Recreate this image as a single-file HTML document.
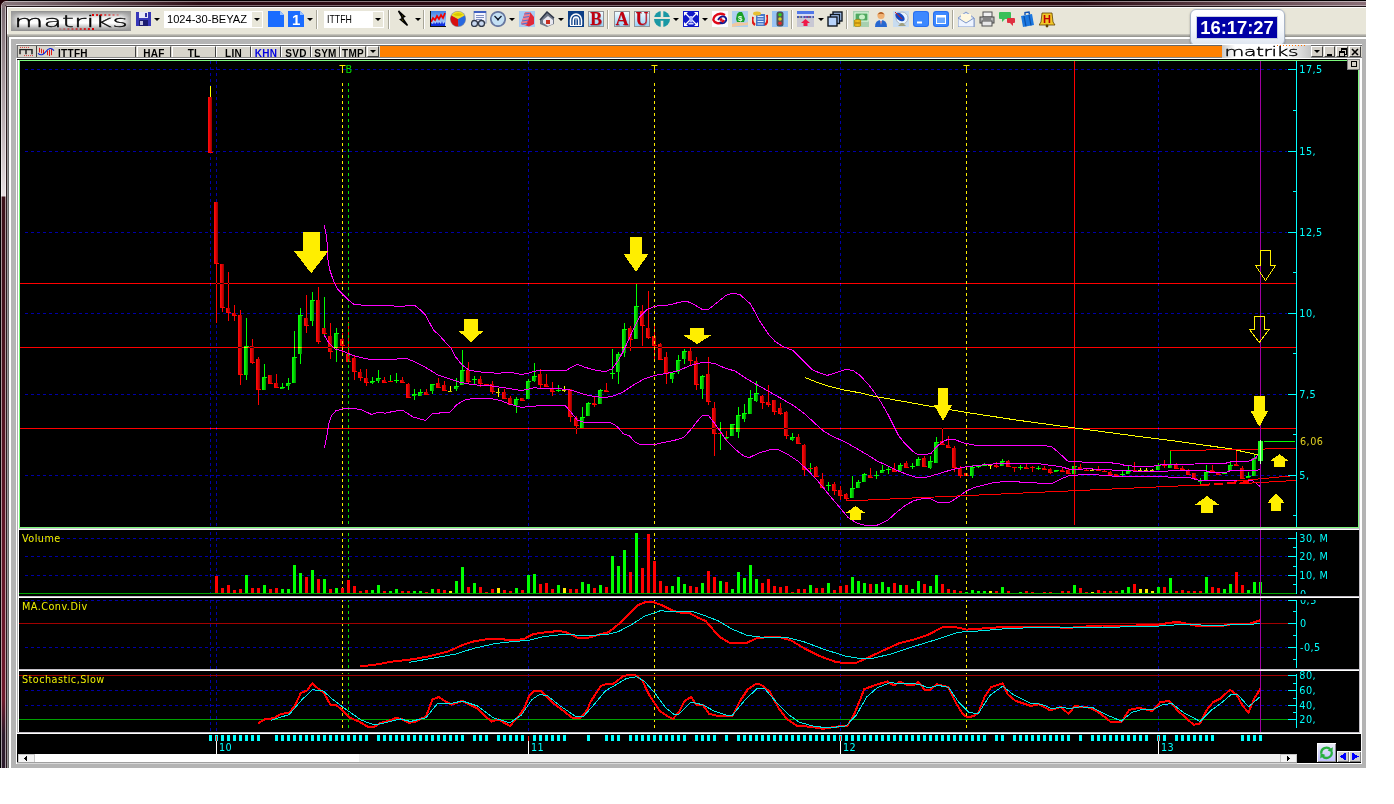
<!DOCTYPE html>
<html><head><meta charset="utf-8"><title>matriks</title>
<style>
html,body{margin:0;padding:0;background:#fff;}
body{width:1394px;height:804px;overflow:hidden;position:relative;font-family:"Liberation Sans",sans-serif;}
.abs{position:absolute;}
#win{position:absolute;left:0;top:0;width:1366px;height:768px;background:#b4b4b4;overflow:hidden;}
#ftop{position:absolute;left:0;top:0;width:1366px;height:7px;background:linear-gradient(90deg,#857479 0,#857479 10px,#2c0c14 200px,#2c0c14 1080px,#8a7078 1366px);}
#ftop:before{content:"";position:absolute;left:0;top:0;width:1366px;height:7px;background:linear-gradient(#000 0,#000 1px,rgba(255,255,255,.45) 1px,rgba(255,255,255,.45) 2px,rgba(255,255,255,0) 2px,rgba(255,255,255,0) 5px,rgba(255,255,255,.4) 5px,rgba(255,255,255,.4) 6px,#201418 6px,#201418 7px);}
#fleft{position:absolute;left:0;top:0;width:7px;height:768px;background:linear-gradient(#3a2a30 0,#7c6c72 8px,#e6dee0 196px,#3c121a 197px,#45141e 298px,#68182a 608px,#6e1a2c 700px,#2c1c2c 735px,#2c1c2c 768px);}
#fleft:before{content:"";position:absolute;left:0;top:0;width:7px;height:768px;background:linear-gradient(90deg,#000 0,#000 1px,rgba(255,255,255,.55) 1px,rgba(255,255,255,.55) 2px,rgba(255,255,255,0) 2px,rgba(255,255,255,0) 5px,rgba(255,255,255,.55) 5px,rgba(255,255,255,.55) 6px,#2a1a1e 6px,#2a1a1e 7px);}
#fl2{position:absolute;left:7px;top:37px;width:2px;height:731px;background:linear-gradient(90deg,#989898 0,#989898 1px,#6c6c6c 1px,#6c6c6c 2px);}
#tb{position:absolute;left:7px;top:7px;width:1359px;height:29px;background:#e8e6d9;box-sizing:border-box;border-top:1px solid #fff;border-left:1px solid #fff;}
#tbl1{position:absolute;left:7px;top:34px;width:1359px;height:3px;background:linear-gradient(#d0cec4,#8c8c88);}
#tbl2{position:absolute;left:7px;top:37px;width:1359px;height:2px;background:#fff;}
#lwhite{position:absolute;left:9px;top:37px;width:2px;height:731px;background:#fff;}
.combo{position:absolute;top:11px;height:17px;background:#fff;font-size:11.1px;line-height:17px;color:#000;white-space:nowrap;}
.combo .btn{position:absolute;right:1px;top:1px;width:10px;height:15px;background:#e8e6d9;}
.dd{position:absolute;width:0;height:0;border-left:3px solid transparent;border-right:3px solid transparent;border-top:3px solid #000;}
.sep{position:absolute;top:10px;width:1px;height:19px;background:#a8a698;border-right:1px solid #fff;}
#tabs{position:absolute;left:17px;top:45px;width:1345px;height:13px;background:#d8d5cc;box-sizing:border-box;border-top:1px solid #686868;border-bottom:1px solid #888;border-left:1px solid #686868;}
#tabw{position:absolute;left:16px;top:44px;width:1346px;height:1px;background:#fff;}
.cell{position:absolute;top:0;height:11px;border-left:1px solid #fff;border-top:1px solid #fff;border-right:1px solid #404040;box-sizing:border-box;font-weight:bold;font-size:10px;line-height:13px;letter-spacing:.25px;text-align:center;color:#000;overflow:hidden;background:#d8d5cc;}
#orange{position:absolute;left:362px;top:0;width:842px;height:11px;background:#ff8000;}
#clock{position:absolute;left:1190px;top:9px;width:93px;height:35px;border:1px solid #a9b4c6;border-radius:6px;background:linear-gradient(#ffffff,#f4f7fb 60%,#dfe6f1);box-sizing:content-box;box-shadow:0 1px 2px rgba(0,0,0,.35);}
#clock div{position:absolute;left:5px;top:6px;width:82px;height:23px;background:#0000a6;border:1px solid #c8d0e0;box-sizing:border-box;color:#fff;font-weight:bold;font-size:18.4px;line-height:21px;text-align:center;letter-spacing:0;}
.wb{position:absolute;top:0;height:11px;background:#d4d0c8;border:1px solid;border-color:#fff #404040 #404040 #fff;box-sizing:border-box;}
</style></head><body>
<div id="win">
<div id="fleft"></div><div id="ftop"></div><svg class="abs" style="left:0;top:0" width="8" height="8" viewBox="0 0 8 8"><rect width="8" height="8" fill="#200006"/><rect x="6" y="6" width="2" height="2" fill="#201418"/><path d="M3.5,8 V6 A2.5,2.5 0 0 1 6,3.5 H8" stroke="#857479" stroke-width="3" fill="none"/><path d="M1.5,8 V6 A4.5,4.5 0 0 1 6,1.5 H8" stroke="#c0b0b4" stroke-width="1" fill="none"/><path d="M5.5,8 V6.5 A1,1 0 0 1 6.5,5.5 H8" stroke="#c8b8bc" stroke-width="1" fill="none"/><rect x="7" y="7" width="1" height="1" fill="#fff"/></svg>
<div id="tb"></div><div id="tbl1"></div><div id="tbl2"></div><div id="lwhite"></div><div id="fl2"></div>

<svg class="abs" style="left:11px;top:11px" width="120" height="20" viewBox="0 0 120 20">
<defs><linearGradient id="lg" x1="0" x2="0" y1="0" y2="1"><stop offset="0" stop-color="#8c8c8c"/><stop offset="0.35" stop-color="#f4f4f4"/><stop offset="0.6" stop-color="#ffffff"/><stop offset="1" stop-color="#8a8a8a"/></linearGradient>
<linearGradient id="lg2" x1="0" x2="1" y1="0" y2="0"><stop offset="0" stop-color="#999" stop-opacity=".9"/><stop offset="0.08" stop-color="#999" stop-opacity="0"/><stop offset="0.92" stop-color="#999" stop-opacity="0"/><stop offset="1" stop-color="#999" stop-opacity=".9"/></linearGradient></defs>
<rect width="120" height="20" fill="url(#lg)"/><rect width="120" height="20" fill="url(#lg2)"/>
<text x="3" y="16" font-family="'DejaVu Sans Light','DejaVu Sans',sans-serif" font-weight="200" font-size="15" textLength="114" lengthAdjust="spacingAndGlyphs" fill="#000" stroke="#000" stroke-width=".3">matriks</text>
<g fill="#e00000">
<rect x="81.0" y="3" width="2" height="2" fill-opacity="1.00"/>
<rect x="85.1" y="3" width="2" height="2" fill-opacity="0.88"/>
<rect x="89.2" y="3" width="2" height="2" fill-opacity="0.76"/>
<rect x="93.3" y="3" width="2" height="2" fill-opacity="0.64"/>
<rect x="97.4" y="3" width="2" height="2" fill-opacity="0.52"/>
<rect x="101.5" y="3" width="2" height="2" fill-opacity="0.40"/>
<rect x="105.6" y="3" width="2" height="2" fill-opacity="0.28"/>
<rect x="81.0" y="17" width="2" height="2" fill-opacity="1.00"/>
<rect x="76.9" y="17" width="2" height="2" fill-opacity="0.90"/>
<rect x="72.8" y="17" width="2" height="2" fill-opacity="0.80"/>
<rect x="68.7" y="17" width="2" height="2" fill-opacity="0.70"/>
<rect x="64.6" y="17" width="2" height="2" fill-opacity="0.60"/>
<rect x="60.5" y="17" width="2" height="2" fill-opacity="0.50"/>
<rect x="56.4" y="17" width="2" height="2" fill-opacity="0.40"/>
<rect x="52.3" y="17" width="2" height="2" fill-opacity="0.30"/>
<rect x="48.2" y="17" width="2" height="2" fill-opacity="0.20"/>
</g><rect x="81" y="3" width="2" height="16" fill="#800000" fill-opacity=".0"/></svg>
<svg class="abs" style="left:136px;top:11px" width="16" height="16" viewBox="0 0 16 16"><rect x="0" y="1" width="15" height="14" fill="#3838b8"/><rect x="3" y="1" width="9" height="6" fill="#e8e8f8"/><rect x="9" y="2" width="2" height="4" fill="#3030a0"/><rect x="3" y="9" width="9" height="6" fill="#1c1c70"/><rect x="4" y="10" width="3" height="4" fill="#c0c0e0"/></svg>
<div class="dd" style="left:154px;top:18px"></div>
<div class="combo" style="left:164px;width:99px;"><span style="margin-left:3px">1024-30-BEYAZ</span><div class="btn"><div class="dd" style="left:2px;top:6px"></div></div></div>
<svg class="abs" style="left:268px;top:11px" width="16" height="16" viewBox="0 0 16 16"><path d="M0,0 H12 L16,4 V16 H0 Z" fill="#1a6cff"/><path d="M12,0 L16,4 H12 Z" fill="#9cc4ff"/></svg>
<svg class="abs" style="left:288px;top:11px" width="16" height="16" viewBox="0 0 16 16"><path d="M0,0 H12 L16,4 V16 H0 Z" fill="#1a6cff"/><path d="M12,0 L16,4 H12 Z" fill="#9cc4ff"/><text x="4" y="14" font-family="Liberation Sans,sans-serif" font-weight="bold" font-size="15" fill="#fff">1</text></svg>
<div class="dd" style="left:307px;top:18px"></div>
<div class="sep" style="left:316px"></div>
<div class="combo" style="left:324px;width:60px;"><span style="margin-left:3px;display:inline-block;transform:scaleX(.79);transform-origin:left center">ITTFH</span><div class="btn"><div class="dd" style="left:2px;top:6px"></div></div></div>
<div class="sep" style="left:388px"></div>
<svg class="abs" style="left:397px;top:10px" width="14" height="18" viewBox="0 0 14 18"><path d="M1.5,1 L7.5,6.5 L5,7.5 L10.5,15.5 L3.5,9.5 L6,8.5 Z" fill="#f0e000" stroke="#000" stroke-width="1.5" stroke-linejoin="miter"/></svg>
<div class="dd" style="left:415px;top:18px"></div>
<div class="sep" style="left:423px"></div>
<svg class="abs" style="left:430px;top:11px" width="16" height="16" viewBox="0 0 16 16"><defs><linearGradient id="ci" x1="0" x2="0" y1="0" y2="1"><stop offset="0" stop-color="#3c80e8"/><stop offset="1" stop-color="#d8e8fc"/></linearGradient></defs><rect width="16" height="16" fill="url(#ci)"/><polygon points="1,15 1,12 3,13 4,11 5,13 7,11 8,13 9,11 11,13 12,10 13,13 15,11 15,15" fill="#1030e0"/><polyline points="1,11 3,7 5,9 7,5 9,8 11,4 13,7 15,2" stroke="#f00000" stroke-width="1.7" fill="none"/><rect x="0" y="0" width="1" height="16" fill="#101010"/><rect x="0" y="15" width="16" height="1" fill="#101010"/></svg>
<svg class="abs" style="left:450px;top:11px" width="16" height="16" viewBox="0 0 16 16"><circle cx="8" cy="8" r="8" fill="#8890a0"/><path d="M8,8 L1.5,4.5 A7.3,7.3 0 0 0 8.5,15.3 Z" fill="#d81010"/><path d="M8,8 L8.5,15.3 A7.3,7.3 0 0 0 14.5,4.5 Z" fill="#2868e0"/><path d="M8,8 L1.5,4.5 A7.3,7.3 0 0 1 14.5,4.5 Z" fill="#f0e020"/><path d="M3,3.5 Q8,0.5 13,3.5 Q8,6.5 3,3.5 Z" fill="#d8c800"/></svg>
<svg class="abs" style="left:471px;top:11px" width="16" height="16" viewBox="0 0 16 16"><rect x="3" y="0" width="12" height="12" fill="#f4f4ff" stroke="#8090b0"/><rect x="3" y="0" width="12" height="2" fill="#4060c0"/><rect x="5" y="4" width="8" height="1" fill="#8090c0"/><rect x="5" y="6" width="8" height="1" fill="#8090c0"/><rect x="5" y="8" width="6" height="1" fill="#8090c0"/><circle cx="3.5" cy="12.5" r="3" fill="#c8d8f0" stroke="#303848" stroke-width="1.3"/><circle cx="10.5" cy="12.5" r="3" fill="#c8d8f0" stroke="#303848" stroke-width="1.3"/></svg>
<svg class="abs" style="left:490px;top:11px" width="16" height="16" viewBox="0 0 16 16"><circle cx="8" cy="8" r="7.2" fill="#c4e0f4" stroke="#6878a0" stroke-width="1.7"/><path d="M4.5,5 L8,8.5 L11.5,5" stroke="#101828" stroke-width="1.3" fill="none"/><circle cx="8" cy="8.5" r="1.1" fill="#101828"/></svg>
<div class="dd" style="left:509px;top:18px"></div>
<svg class="abs" style="left:519px;top:11px" width="16" height="16" viewBox="0 0 16 16"><rect width="16" height="16" fill="#a8ccf4"/><path d="M2,13 L6,1.5 L11,1 L15,6 L15,13 L10,15.5 Z" fill="#e02838"/><path d="M2,13 L6,1.5 L11,1 L11,4 L7,14.5 Z" fill="#f08090"/><path d="M3.2,10 L9.5,9 M4.4,6.5 L10,5.5 M5.6,3 L10.8,2.3 M2.6,13 L8.5,12.2" stroke="#5070d0" stroke-width="1.2"/></svg>
<svg class="abs" style="left:539px;top:11px" width="16" height="16" viewBox="0 0 16 16"><path d="M1,9 L8,1 L15,7 L15,13 L8,16 L1,13 Z" fill="#707888"/><path d="M4,9 L9,5 L14,9 L14,13 L9,15 L4,12 Z" fill="#e8e8f0"/><rect x="7" y="9" width="4" height="4" fill="#c83020"/><path d="M1,9 L8,1 L15,7" stroke="#303848" stroke-width="1.5" fill="none"/></svg>
<div class="dd" style="left:558px;top:18px"></div>
<svg class="abs" style="left:568px;top:11px" width="16" height="16" viewBox="0 0 16 16"><rect width="16" height="16" fill="#0c3f86"/><path d="M2.5,14 V9 A5.5,6 0 0 1 13.5,9 V14 M5.3,14 V9.5 A2.7,3.5 0 0 1 10.7,9.5 V14" stroke="#fff" stroke-width="1.5" fill="none"/><path d="M8,6.5 V14 M2,14.5 H14" stroke="#fff" stroke-width="1"/></svg>
<svg class="abs" style="left:588px;top:11px" width="16" height="16" viewBox="0 0 16 16"><defs><linearGradient id="lt588" x1="0" x2="0" y1="0" y2="1"><stop offset="0" stop-color="#f4fcff"/><stop offset="1" stop-color="#98d0f8"/></linearGradient></defs><rect x="0.5" y="0.5" width="15" height="15" fill="url(#lt588)" stroke="#909498"/><text x="8.6" y="14.6" text-anchor="middle" font-family="Liberation Serif,serif" font-weight="bold" font-size="18" fill="#806068" fill-opacity=".6">B</text><text x="8" y="14.2" text-anchor="middle" font-family="Liberation Serif,serif" font-weight="bold" font-size="18" fill="#c00010">B</text></svg>
<div class="sep" style="left:607px"></div>
<svg class="abs" style="left:614px;top:11px" width="16" height="16" viewBox="0 0 16 16"><defs><linearGradient id="lt614" x1="0" x2="0" y1="0" y2="1"><stop offset="0" stop-color="#f4fcff"/><stop offset="1" stop-color="#98d0f8"/></linearGradient></defs><rect x="0.5" y="0.5" width="15" height="15" fill="url(#lt614)" stroke="#909498"/><text x="8.6" y="14.6" text-anchor="middle" font-family="Liberation Serif,serif" font-weight="bold" font-size="18" fill="#806068" fill-opacity=".6">A</text><text x="8" y="14.2" text-anchor="middle" font-family="Liberation Serif,serif" font-weight="bold" font-size="18" fill="#c00010">A</text></svg>
<svg class="abs" style="left:634px;top:11px" width="16" height="16" viewBox="0 0 16 16"><defs><linearGradient id="lt634" x1="0" x2="0" y1="0" y2="1"><stop offset="0" stop-color="#f4fcff"/><stop offset="1" stop-color="#98d0f8"/></linearGradient></defs><rect x="0.5" y="0.5" width="15" height="15" fill="url(#lt634)" stroke="#909498"/><text x="8.6" y="14.6" text-anchor="middle" font-family="Liberation Serif,serif" font-weight="bold" font-size="18" fill="#806068" fill-opacity=".6">U</text><text x="8" y="14.2" text-anchor="middle" font-family="Liberation Serif,serif" font-weight="bold" font-size="18" fill="#c00010">U</text></svg>
<svg class="abs" style="left:654px;top:11px" width="16" height="16" viewBox="0 0 16 16"><circle cx="8" cy="8" r="8" fill="#1a98a4"/><rect x="6.7" y="0" width="2.6" height="16" fill="#e8e6d9"/><rect x="0" y="6" width="16" height="2" fill="#e8e6d9"/><rect x="4" y="8" width="8" height="1.5" fill="#1a98a4"/><rect x="6.7" y="8" width="2.6" height="1.5" fill="#1a98a4"/></svg>
<div class="dd" style="left:673px;top:18px"></div>
<svg class="abs" style="left:683px;top:11px" width="16" height="16" viewBox="0 0 16 16"><rect width="16" height="16" fill="#1018c8"/><path d="M2,2 L14,14 M14,2 L2,14" stroke="#fff" stroke-width="1.2"/><path d="M1,1 H5 L1,5 Z M15,1 H11 L15,5 Z M1,15 H5 L1,11 Z M15,15 H11 L15,11 Z" fill="#fff"/><rect x="6.5" y="5" width="3" height="6.5" fill="#b0b8ff"/><rect x="5.5" y="12" width="5" height="1.5" fill="#d0d4ff"/></svg>
<div class="dd" style="left:702px;top:18px"></div>
<svg class="abs" style="left:712px;top:11px" width="16" height="16" viewBox="0 0 16 16"><rect width="16" height="16" fill="#fcfcff"/><path d="M13,4 Q7,1 3,5 Q-1,10 5,12 Q10,13 12,9" stroke="#e00818" stroke-width="2.4" fill="none"/><path d="M6,9 Q9,4 13,6 Q16,9 12,12 Q9,13 8,11" stroke="#101890" stroke-width="1.8" fill="none"/><circle cx="9" cy="8.5" r="1.5" fill="#e00818"/></svg>
<svg class="abs" style="left:732px;top:11px" width="16" height="16" viewBox="0 0 16 16"><rect width="16" height="16" fill="#b0d0f0"/><path d="M5,3 L7,1 L10,1 L11,3 L13,8 L12,11 L5,11 L4,8 Z" fill="#18a028"/><text x="8.3" y="10" text-anchor="middle" font-family="Liberation Sans,sans-serif" font-weight="bold" font-size="8" fill="#e8ffe8">$</text><path d="M0,13 L6,11 L13,12 L16,11 L16,14 L6,15 L0,16 Z" fill="#f0c8a0"/></svg>
<svg class="abs" style="left:752px;top:11px" width="16" height="16" viewBox="0 0 16 16"><rect x="4" y="3" width="9" height="12" fill="#4878c8"/><rect x="5.5" y="5" width="6" height="1" fill="#e0ecff"/><rect x="5.5" y="7.5" width="6" height="1" fill="#e0ecff"/><rect x="5.5" y="10" width="6" height="1" fill="#e0ecff"/><rect x="5.5" y="12.5" width="6" height="1" fill="#e0ecff"/><ellipse cx="5" cy="2.5" rx="4" ry="2" fill="#e8c030"/><path d="M1,6 Q-1,11 3,14 M15,4 Q17,10 13,14" stroke="#e01818" stroke-width="2.2" fill="none"/></svg>
<svg class="abs" style="left:772px;top:11px" width="16" height="16" viewBox="0 0 16 16"><rect width="16" height="16" fill="#98c4f4"/><rect x="4.5" y="0.5" width="7" height="15" rx="2.5" fill="#505458"/><circle cx="8" cy="3.8" r="1.8" fill="#30d020"/><circle cx="8" cy="8" r="1.8" fill="#d8d020"/><circle cx="8" cy="12.2" r="1.8" fill="#e02828"/></svg>
<div class="sep" style="left:791px"></div>
<svg class="abs" style="left:797px;top:11px" width="17" height="16" viewBox="0 0 17 16"><rect width="17" height="16" fill="#c8c8d4"/><rect x="0" y="0" width="17" height="3" fill="#5078e8"/><rect x="0" y="3" width="17" height="2" fill="#d8dcf4"/><rect x="0" y="5" width="17" height="2" fill="#4858a8"/><g><rect x="2" y="5.5" width="1.5" height="1" fill="#f0e040"/><rect x="5" y="5.5" width="1.5" height="1" fill="#fff"/><rect x="8" y="5.5" width="1.5" height="1" fill="#f040c0"/><rect x="11" y="5.5" width="1.5" height="1" fill="#f04040"/><rect x="14" y="5.5" width="1.5" height="1" fill="#fff"/></g><path d="M8.5,8 L13,12 H10.5 V15 H6.5 V12 H4 Z" fill="#f01848"/></svg>
<div class="dd" style="left:818px;top:18px"></div>
<svg class="abs" style="left:827px;top:11px" width="16" height="16" viewBox="0 0 16 16"><rect x="6" y="1" width="9" height="9" fill="#a8c8f8" stroke="#101820" stroke-width="1.4"/><rect x="3.5" y="3.5" width="9" height="9" fill="#a8c8f8" stroke="#101820" stroke-width="1.4"/><rect x="1" y="6" width="9" height="9" fill="#b8d4fc" stroke="#101820" stroke-width="1.4"/></svg>
<div class="sep" style="left:846px"></div>
<svg class="abs" style="left:853px;top:11px" width="16" height="16" viewBox="0 0 16 16"><rect width="16" height="16" fill="#a8d0b0"/><rect x="2" y="2" width="13" height="8" fill="#50a860" stroke="#e8ffe8" stroke-width="1"/><ellipse cx="9" cy="6" rx="3" ry="2.5" fill="#c8f0c8"/><ellipse cx="4.5" cy="12" rx="3.5" ry="1.5" fill="#f0c020" stroke="#a07000" stroke-width=".6"/><ellipse cx="4.5" cy="10" rx="3.5" ry="1.5" fill="#f0c020" stroke="#a07000" stroke-width=".6"/><ellipse cx="4.5" cy="14" rx="3.5" ry="1.5" fill="#f0c020" stroke="#a07000" stroke-width=".6"/></svg>
<svg class="abs" style="left:873px;top:11px" width="16" height="16" viewBox="0 0 16 16"><circle cx="8" cy="4.5" r="3.6" fill="#f0b070"/><path d="M4.5,3.5 Q8,-1.5 11.5,3.5 Q8,2 4.5,3.5 Z" fill="#a85820"/><path d="M2,16 Q2,9 8,9 Q14,9 14,16 Z" fill="#2868d0"/><path d="M7,9 L8,14 L9,9 Z" fill="#e8f0ff"/><path d="M7.6,10 L8,13.5 L8.4,10 Z" fill="#c02020"/></svg>
<svg class="abs" style="left:893px;top:11px" width="16" height="16" viewBox="0 0 16 16"><rect width="16" height="16" fill="#c8dcf0"/><circle cx="9" cy="7" r="6" fill="#e8f4ff" stroke="#b0b8c0"/><ellipse cx="7" cy="6" rx="5.5" ry="3.2" transform="rotate(40 7 6)" fill="#1848c0"/><path d="M2,1 L9,8" stroke="#d02020" stroke-width="1"/><path d="M5,15 H13 L10,12 H8 Z" fill="#a0a080"/></svg>
<svg class="abs" style="left:913px;top:11px" width="16" height="16" viewBox="0 0 16 16"><rect width="16" height="16" rx="3" fill="#2870f0"/><rect x="1" y="1" width="14" height="14" rx="2.5" fill="#3c88ff"/><rect x="4" y="10.5" width="5" height="2" fill="#fff"/></svg>
<svg class="abs" style="left:933px;top:11px" width="16" height="16" viewBox="0 0 16 16"><rect width="16" height="16" rx="3" fill="#2870f0"/><rect x="1" y="1" width="14" height="14" rx="2.5" fill="#3c88ff"/><rect x="3.5" y="4.5" width="9" height="8" fill="#6aa8ff" stroke="#fff" stroke-width="1"/><rect x="3" y="4" width="10" height="2.5" fill="#fff"/></svg>
<div class="sep" style="left:952px"></div>
<svg class="abs" style="left:958px;top:11px" width="17" height="16" viewBox="0 0 17 16"><path d="M0,7 L8,1 L16,7 V16 H0 Z" fill="#d8e4f8" stroke="#8098c8"/><rect x="3" y="3" width="10" height="8" fill="#fff8e0"/><path d="M0,7 L8,12 L16,7 V16 H0 Z" fill="#eef4ff" stroke="#8098c8"/></svg>
<svg class="abs" style="left:979px;top:11px" width="16" height="16" viewBox="0 0 16 16"><rect x="4" y="1" width="9" height="5" fill="#f0f0f0" stroke="#505050"/><rect x="1" y="6" width="14" height="6" fill="#b8b8b8" stroke="#484848"/><rect x="3" y="10" width="10" height="5" fill="#e8e8e8" stroke="#505050"/><rect x="4" y="7.5" width="8" height="1" fill="#505050"/></svg>
<svg class="abs" style="left:999px;top:11px" width="16" height="16" viewBox="0 0 16 16"><path d="M1,1 H11 Q12,1 12,2 V7 Q12,8 11,8 H6 L3,11 V8 H1 Q0,8 0,7 V2 Q0,1 1,1 Z" fill="#38c058"/><path d="M9,7 H15 Q16,7 16,8 V11 Q16,12 15,12 H14 V15 L11,12 H9 Q8,12 8,11 V8 Q8,7 9,7 Z" fill="#e03040"/></svg>
<svg class="abs" style="left:1019px;top:11px" width="16" height="16" viewBox="0 0 16 16"><path d="M2,5 L13,3 L15,14 L4,16 Z" fill="#1c78e0"/><path d="M6,4 L6,1.5 L10,1 L10.5,3.5" stroke="#1050b0" stroke-width="1.4" fill="none"/><path d="M5,5 L7,15.4 M10,4 L12,14.5" stroke="#0c50a8" stroke-width="1.2"/></svg>
<svg class="abs" style="left:1039px;top:11px" width="17" height="17" viewBox="0 0 17 17"><path d="M3,2 H13 L14,11 L16,14 H0 L2,11 Z" fill="#f0c828" stroke="#604000" stroke-width=".8"/><circle cx="8" cy="15" r="1.4" fill="#604000"/><text x="8" y="12" text-anchor="middle" font-family="Liberation Sans,sans-serif" font-weight="bold" font-size="11" fill="#c00000">H</text></svg>
<div id="clock"><div>16:17:27</div></div>
<div id="tabw"></div><div id="tabs">
<div id="orange"></div>
<svg class="abs" style="left:0px;top:0px" width="38" height="11" viewBox="0 0 38 12" preserveAspectRatio="none"><rect width="18" height="12" fill="#d8d5cc"/><path d="M2,9 V4 H14 V9 M8,4 V9" stroke="#202020" stroke-width="1.5" fill="none"/><g fill="#e03030"><rect x="2" y="1" width="1" height="1"/><rect x="4" y="1" width="1" height="1"/><rect x="6" y="1" width="1" height="1"/><rect x="8" y="1" width="1" height="1"/><rect x="10" y="1" width="1" height="1"/><rect x="6" y="10" width="1" height="1"/><rect x="8" y="10" width="1" height="1"/><rect x="10" y="10" width="1" height="1"/><rect x="12" y="10" width="1" height="1"/><rect x="14" y="10" width="1" height="1"/></g><rect x="18" y="0" width="1" height="12" fill="#404040"/><rect x="19" y="0" width="18" height="12" fill="#d8d5cc"/><g stroke="#e01010" stroke-width="1"><path d="M21.5,2 V7 M23.5,3 V8 M25.5,4 V9 M29.5,5 V10 M31.5,4 V11 M33.5,3 V10"/></g><path d="M20,8 Q24,12 28,6 T36,5" stroke="#0020e0" stroke-width="1.2" fill="none"/><rect x="37" y="0" width="1" height="12" fill="#404040"/></svg>
<div class="cell" style="left:37px;width:81px;color:#000;text-align:left;padding-left:3px;letter-spacing:.3px;border-left:none;">ITTFH</div>
<div class="cell" style="left:119px;width:34px;color:#000;">HAF</div>
<div class="cell" style="left:154px;width:44px;color:#000;">TL</div>
<div class="cell" style="left:198px;width:35px;color:#000;">LIN</div>
<div class="cell" style="left:233px;width:30px;color:#0000e0;">KHN</div>
<div class="cell" style="left:263px;width:30px;color:#000;">SVD</div>
<div class="cell" style="left:293px;width:29px;color:#000;">SYM</div>
<div class="cell" style="left:322px;width:26px;color:#000;">TMP</div>
<div class="wb" style="left:349px;width:12px;"><div class="dd" style="left:2px;top:3px"></div></div>
<svg class="abs" style="left:1204px;top:-1px" width="89" height="13" viewBox="0 0 89 13"><defs><linearGradient id="lg3" x1="0" x2="1" y1="0" y2="0"><stop offset="0" stop-color="#c8c8c8"/><stop offset="0.15" stop-color="#ffffff"/><stop offset="0.7" stop-color="#ffffff"/><stop offset="1" stop-color="#c4c4c4"/></linearGradient></defs><rect width="89" height="13" fill="url(#lg3)"/>
<text transform="translate(2.5,11.2) scale(1.57,1)" font-family="'DejaVu Sans Light','DejaVu Sans',sans-serif" font-weight="200" font-size="13" letter-spacing="-0.3" fill="#000" stroke="#000" stroke-width=".35">matriks</text>
<g fill="#ff7000"><rect x="55" y="0" width="1" height="1"/><rect x="58" y="0" width="1" height="1"/><rect x="61" y="0" width="1" height="1"/><rect x="64" y="0" width="1" height="1"/><rect x="67" y="0" width="1" height="1"/><rect x="70" y="0" width="1" height="1"/><rect x="73" y="0" width="1" height="1"/><rect x="76" y="0" width="1" height="1"/><rect x="79" y="0" width="1" height="1"/><rect x="82" y="0" width="1" height="1"/></g></svg>
<div class="wb" style="left:1293px;width:12px;"><div class="dd" style="left:2px;top:3px"></div></div>
<div class="wb" style="left:1306px;width:11px;"><div class="abs" style="left:2px;top:7px;width:5px;height:2px;background:#000"></div></div>
<div class="wb" style="left:1318px;width:12px;"><div class="abs" style="left:4px;top:1px;width:4px;height:4px;border:1px solid #000;border-top-width:2px;box-sizing:content-box"></div><div class="abs" style="left:2px;top:4px;width:4px;height:3px;border:1px solid #000;border-top-width:2px;background:#d4d0c8;box-sizing:content-box"></div></div>
<div class="wb" style="left:1331px;width:12px;"><svg class="abs" style="left:1px;top:1px" width="8" height="8" viewBox="0 0 8 8"><path d="M1,1 L7,7 M7,1 L1,7" stroke="#000" stroke-width="1.6"/></svg></div>
</div>
<svg id="chart" width="1394" height="804" viewBox="0 0 1394 804" shape-rendering="crispEdges" style="position:absolute;left:0;top:0">
<defs>
<linearGradient id="gR" x1="0" x2="1" y1="0" y2="0"><stop offset="0" stop-color="#ff1010"/><stop offset="0.45" stop-color="#e80000"/><stop offset="1" stop-color="#900000"/></linearGradient>
<linearGradient id="gG" x1="0" x2="1" y1="0" y2="0"><stop offset="0" stop-color="#10ff10"/><stop offset="0.45" stop-color="#00e000"/><stop offset="1" stop-color="#008800"/></linearGradient>
<linearGradient id="gY" x1="0" x2="1" y1="0" y2="0"><stop offset="0" stop-color="#ffff00"/><stop offset="1" stop-color="#b0b000"/></linearGradient>
</defs>
<rect x="16" y="58" width="1346" height="706" fill="#ffffff" />
<rect x="17" y="59" width="1342" height="1" fill="#000000" />
<rect x="19" y="60" width="1340" height="468" fill="#7cf87c" />
<rect x="20" y="61" width="1338" height="466" fill="#000000" />
<rect x="19" y="528" width="1341" height="1" fill="#c4c0c8" />
<rect x="19" y="530" width="1340" height="66" fill="#000000" />
<rect x="19" y="596" width="1341" height="1" fill="#c4c0c8" />
<rect x="19" y="598" width="1340" height="71" fill="#000000" />
<rect x="19" y="669" width="1341" height="1" fill="#c4c0c8" />
<rect x="19" y="671" width="1340" height="61" fill="#000000" />
<rect x="17" y="732" width="1343" height="1" fill="#c4c0c8" />
<rect x="17" y="60" width="1" height="672" fill="#b0b0b0" />
<rect x="1359" y="60" width="1" height="672" fill="#c4c0c8" />
<rect x="17" y="734" width="1344" height="29" fill="#000000" />
<line x1="25" y1="69.5" x2="1287" y2="69.5" stroke="#0000a8" stroke-dasharray="3 3"/>
<line x1="25" y1="151.5" x2="1287" y2="151.5" stroke="#0000a8" stroke-dasharray="3 3"/>
<line x1="25" y1="232.5" x2="1287" y2="232.5" stroke="#0000a8" stroke-dasharray="3 3"/>
<line x1="25" y1="313.5" x2="1287" y2="313.5" stroke="#0000a8" stroke-dasharray="3 3"/>
<line x1="25" y1="394.5" x2="1287" y2="394.5" stroke="#0000a8" stroke-dasharray="3 3"/>
<line x1="25" y1="475.5" x2="1287" y2="475.5" stroke="#0000a8" stroke-dasharray="3 3"/>
<line x1="210.5" y1="61" x2="210.5" y2="527" stroke="#0000a8" stroke-dasharray="3 3"/>
<line x1="210.5" y1="530" x2="210.5" y2="593" stroke="#0000a8" stroke-dasharray="3 3" stroke-dashoffset="4"/>
<line x1="210.5" y1="598" x2="210.5" y2="669" stroke="#0000a8" stroke-dasharray="3 3" stroke-dashoffset="4"/>
<line x1="210.5" y1="671" x2="210.5" y2="732" stroke="#0000a8" stroke-dasharray="3 3" stroke-dashoffset="3"/>
<line x1="216.5" y1="61" x2="216.5" y2="527" stroke="#0000a8" stroke-dasharray="3 3"/>
<line x1="216.5" y1="530" x2="216.5" y2="593" stroke="#0000a8" stroke-dasharray="3 3" stroke-dashoffset="4"/>
<line x1="216.5" y1="598" x2="216.5" y2="669" stroke="#0000a8" stroke-dasharray="3 3" stroke-dashoffset="4"/>
<line x1="216.5" y1="671" x2="216.5" y2="732" stroke="#0000a8" stroke-dasharray="3 3" stroke-dashoffset="3"/>
<line x1="528.5" y1="61" x2="528.5" y2="527" stroke="#0000a8" stroke-dasharray="3 3"/>
<line x1="528.5" y1="530" x2="528.5" y2="593" stroke="#0000a8" stroke-dasharray="3 3" stroke-dashoffset="4"/>
<line x1="528.5" y1="598" x2="528.5" y2="669" stroke="#0000a8" stroke-dasharray="3 3" stroke-dashoffset="4"/>
<line x1="528.5" y1="671" x2="528.5" y2="732" stroke="#0000a8" stroke-dasharray="3 3" stroke-dashoffset="3"/>
<line x1="840.5" y1="61" x2="840.5" y2="527" stroke="#0000a8" stroke-dasharray="3 3"/>
<line x1="840.5" y1="530" x2="840.5" y2="593" stroke="#0000a8" stroke-dasharray="3 3" stroke-dashoffset="4"/>
<line x1="840.5" y1="598" x2="840.5" y2="669" stroke="#0000a8" stroke-dasharray="3 3" stroke-dashoffset="4"/>
<line x1="840.5" y1="671" x2="840.5" y2="732" stroke="#0000a8" stroke-dasharray="3 3" stroke-dashoffset="3"/>
<line x1="1158.5" y1="61" x2="1158.5" y2="527" stroke="#0000a8" stroke-dasharray="3 3"/>
<line x1="1158.5" y1="530" x2="1158.5" y2="593" stroke="#0000a8" stroke-dasharray="3 3" stroke-dashoffset="4"/>
<line x1="1158.5" y1="598" x2="1158.5" y2="669" stroke="#0000a8" stroke-dasharray="3 3" stroke-dashoffset="4"/>
<line x1="1158.5" y1="671" x2="1158.5" y2="732" stroke="#0000a8" stroke-dasharray="3 3" stroke-dashoffset="3"/>
<line x1="25" y1="538.5" x2="1287" y2="538.5" stroke="#0000a8" stroke-dasharray="3 3"/>
<line x1="25" y1="556.5" x2="1287" y2="556.5" stroke="#0000a8" stroke-dasharray="3 3"/>
<line x1="25" y1="575.5" x2="1287" y2="575.5" stroke="#0000a8" stroke-dasharray="3 3"/>
<line x1="25" y1="600.5" x2="1287" y2="600.5" stroke="#0000a8" stroke-dasharray="3 3"/>
<line x1="25" y1="647.5" x2="1287" y2="647.5" stroke="#0000a8" stroke-dasharray="3 3"/>
<line x1="25" y1="690.5" x2="1287" y2="690.5" stroke="#0000a8" stroke-dasharray="3 3"/>
<line x1="25" y1="705.5" x2="1287" y2="705.5" stroke="#0000a8" stroke-dasharray="3 3"/>
<rect x="210" y="86" width="1" height="67" fill="#ffff00" />
<rect x="208" y="97" width="4" height="56" fill="url(#gR)" />
<rect x="208" y="152" width="5" height="1" fill="#ff0000" />
<rect x="216" y="202" width="1" height="121" fill="#ff0000" />
<rect x="214" y="202" width="4" height="62" fill="url(#gR)" />
<rect x="214" y="263" width="5" height="1" fill="#ff0000" />
<rect x="222" y="264" width="1" height="48" fill="#ff0000" />
<rect x="220" y="264" width="4" height="44" fill="url(#gR)" />
<rect x="220" y="307" width="5" height="1" fill="#ff0000" />
<rect x="228" y="272" width="1" height="49" fill="#ff0000" />
<rect x="226" y="308" width="4" height="5" fill="url(#gR)" />
<rect x="226" y="312" width="5" height="1" fill="#ff0000" />
<rect x="234" y="305" width="1" height="16" fill="#ff0000" />
<rect x="232" y="313" width="4" height="3" fill="url(#gR)" />
<rect x="232" y="315" width="5" height="1" fill="#ff0000" />
<rect x="240" y="310" width="1" height="75" fill="#ff0000" />
<rect x="238" y="315" width="4" height="60" fill="url(#gR)" />
<rect x="238" y="374" width="5" height="1" fill="#ff0000" />
<rect x="246" y="318" width="1" height="62" fill="#00ff00" />
<rect x="244" y="346" width="4" height="29" fill="url(#gG)" />
<rect x="244" y="346" width="5" height="1" fill="#00ff00" />
<rect x="252" y="339" width="1" height="25" fill="#ff0000" />
<rect x="250" y="346" width="4" height="17" fill="url(#gR)" />
<rect x="250" y="362" width="5" height="1" fill="#ff0000" />
<rect x="258" y="357" width="1" height="48" fill="#ff0000" />
<rect x="256" y="359" width="4" height="31" fill="url(#gR)" />
<rect x="256" y="389" width="5" height="1" fill="#ff0000" />
<rect x="264" y="364" width="1" height="26" fill="#00ff00" />
<rect x="262" y="377" width="4" height="13" fill="url(#gG)" />
<rect x="262" y="377" width="5" height="1" fill="#00ff00" />
<rect x="270" y="375" width="1" height="9" fill="#ff0000" />
<rect x="268" y="375" width="4" height="9" fill="url(#gR)" />
<rect x="268" y="383" width="5" height="1" fill="#ff0000" />
<rect x="276" y="374" width="1" height="14" fill="#ff0000" />
<rect x="274" y="383" width="4" height="5" fill="url(#gR)" />
<rect x="274" y="387" width="5" height="1" fill="#ff0000" />
<rect x="282" y="383" width="1" height="6" fill="#00ff00" />
<rect x="280" y="387" width="4" height="2" fill="url(#gG)" />
<rect x="280" y="387" width="5" height="1" fill="#00ff00" />
<rect x="288" y="378" width="1" height="12" fill="#00ff00" />
<rect x="286" y="383" width="4" height="3" fill="url(#gG)" />
<rect x="286" y="383" width="5" height="1" fill="#00ff00" />
<rect x="294" y="331" width="1" height="52" fill="#00ff00" />
<rect x="292" y="357" width="4" height="26" fill="url(#gG)" />
<rect x="292" y="357" width="5" height="1" fill="#00ff00" />
<rect x="300" y="308" width="1" height="56" fill="#00ff00" />
<rect x="298" y="315" width="4" height="39" fill="url(#gG)" />
<rect x="298" y="315" width="5" height="1" fill="#00ff00" />
<rect x="306" y="295" width="1" height="38" fill="#ff0000" />
<rect x="304" y="318" width="4" height="8" fill="url(#gR)" />
<rect x="304" y="325" width="5" height="1" fill="#ff0000" />
<rect x="312" y="292" width="1" height="34" fill="#00ff00" />
<rect x="310" y="300" width="4" height="21" fill="url(#gG)" />
<rect x="310" y="300" width="5" height="1" fill="#00ff00" />
<rect x="318" y="287" width="1" height="57" fill="#ff0000" />
<rect x="316" y="300" width="4" height="42" fill="url(#gR)" />
<rect x="316" y="341" width="5" height="1" fill="#ff0000" />
<rect x="324" y="297" width="1" height="39" fill="#00ff00" />
<rect x="322" y="328" width="4" height="6" fill="url(#gR)" />
<rect x="322" y="333" width="5" height="1" fill="#ff0000" />
<rect x="330" y="323" width="1" height="36" fill="#ff0000" />
<rect x="328" y="336" width="4" height="16" fill="url(#gR)" />
<rect x="328" y="351" width="5" height="1" fill="#ff0000" />
<rect x="336" y="328" width="1" height="34" fill="#00ff00" />
<rect x="334" y="333" width="4" height="15" fill="url(#gG)" />
<rect x="334" y="333" width="5" height="1" fill="#00ff00" />
<rect x="342" y="333" width="1" height="22" fill="#ff0000" />
<rect x="340" y="339" width="4" height="7" fill="url(#gR)" />
<rect x="340" y="345" width="5" height="1" fill="#ff0000" />
<rect x="348" y="322" width="1" height="40" fill="#ff0000" />
<rect x="346" y="354" width="4" height="8" fill="url(#gR)" />
<rect x="346" y="361" width="5" height="1" fill="#ff0000" />
<rect x="354" y="355" width="1" height="25" fill="#ff0000" />
<rect x="352" y="358" width="4" height="14" fill="url(#gR)" />
<rect x="352" y="371" width="5" height="1" fill="#ff0000" />
<rect x="360" y="369" width="1" height="12" fill="#ff0000" />
<rect x="358" y="372" width="4" height="6" fill="url(#gR)" />
<rect x="358" y="377" width="5" height="1" fill="#ff0000" />
<rect x="366" y="369" width="1" height="17" fill="#ff0000" />
<rect x="364" y="378" width="4" height="5" fill="url(#gR)" />
<rect x="364" y="382" width="5" height="1" fill="#ff0000" />
<rect x="372" y="377" width="1" height="7" fill="#00ff00" />
<rect x="370" y="381" width="4" height="2" fill="url(#gG)" />
<rect x="370" y="381" width="5" height="1" fill="#00ff00" />
<rect x="378" y="370" width="1" height="13" fill="#00ff00" />
<rect x="376" y="378" width="4" height="3" fill="url(#gG)" />
<rect x="376" y="378" width="5" height="1" fill="#00ff00" />
<rect x="384" y="377" width="1" height="6" fill="#ff0000" />
<rect x="382" y="380" width="4" height="3" fill="url(#gR)" />
<rect x="382" y="382" width="5" height="1" fill="#ff0000" />
<rect x="390" y="375" width="1" height="7" fill="#00ff00" />
<rect x="388" y="381" width="4" height="1" fill="url(#gR)" />
<rect x="388" y="381" width="5" height="1" fill="#ff0000" />
<rect x="396" y="373" width="1" height="10" fill="#00ff00" />
<rect x="394" y="380" width="4" height="1" fill="url(#gG)" />
<rect x="394" y="380" width="5" height="1" fill="#00ff00" />
<rect x="402" y="377" width="1" height="6" fill="#ff0000" />
<rect x="400" y="380" width="4" height="3" fill="url(#gR)" />
<rect x="400" y="382" width="5" height="1" fill="#ff0000" />
<rect x="408" y="383" width="1" height="15" fill="#ff0000" />
<rect x="406" y="384" width="4" height="14" fill="url(#gR)" />
<rect x="406" y="397" width="5" height="1" fill="#ff0000" />
<rect x="414" y="389" width="1" height="11" fill="#00ff00" />
<rect x="412" y="394" width="4" height="2" fill="url(#gG)" />
<rect x="412" y="394" width="5" height="1" fill="#00ff00" />
<rect x="420" y="389" width="1" height="7" fill="#00ff00" />
<rect x="418" y="392" width="4" height="4" fill="url(#gG)" />
<rect x="418" y="392" width="5" height="1" fill="#00ff00" />
<rect x="426" y="389" width="1" height="6" fill="#ff0000" />
<rect x="424" y="392" width="4" height="3" fill="url(#gR)" />
<rect x="424" y="394" width="5" height="1" fill="#ff0000" />
<rect x="432" y="384" width="1" height="10" fill="#00ff00" />
<rect x="430" y="384" width="4" height="7" fill="url(#gG)" />
<rect x="430" y="384" width="5" height="1" fill="#00ff00" />
<rect x="438" y="378" width="1" height="10" fill="#ff0000" />
<rect x="436" y="383" width="4" height="5" fill="url(#gR)" />
<rect x="436" y="387" width="5" height="1" fill="#ff0000" />
<rect x="444" y="381" width="1" height="10" fill="#ff0000" />
<rect x="442" y="385" width="4" height="6" fill="url(#gR)" />
<rect x="442" y="390" width="5" height="1" fill="#ff0000" />
<rect x="450" y="386" width="1" height="6" fill="#ffff00" />
<rect x="448" y="391" width="4" height="1" fill="url(#gY)" />
<rect x="456" y="378" width="1" height="13" fill="#00ff00" />
<rect x="454" y="386" width="4" height="3" fill="url(#gG)" />
<rect x="454" y="386" width="5" height="1" fill="#00ff00" />
<rect x="462" y="350" width="1" height="35" fill="#00ff00" />
<rect x="460" y="370" width="4" height="15" fill="url(#gG)" />
<rect x="460" y="370" width="5" height="1" fill="#00ff00" />
<rect x="468" y="362" width="1" height="22" fill="#ff0000" />
<rect x="466" y="370" width="4" height="12" fill="url(#gR)" />
<rect x="466" y="381" width="5" height="1" fill="#ff0000" />
<rect x="474" y="376" width="1" height="9" fill="#00ff00" />
<rect x="472" y="379" width="4" height="1" fill="url(#gG)" />
<rect x="472" y="379" width="5" height="1" fill="#00ff00" />
<rect x="480" y="376" width="1" height="11" fill="#ff0000" />
<rect x="478" y="379" width="4" height="5" fill="url(#gR)" />
<rect x="478" y="383" width="5" height="1" fill="#ff0000" />
<rect x="486" y="384" width="1" height="1" fill="#ff0000" />
<rect x="484" y="384" width="4" height="1" fill="url(#gR)" />
<rect x="484" y="384" width="5" height="1" fill="#ff0000" />
<rect x="492" y="381" width="1" height="13" fill="#ff0000" />
<rect x="490" y="384" width="4" height="8" fill="url(#gR)" />
<rect x="490" y="391" width="5" height="1" fill="#ff0000" />
<rect x="498" y="388" width="1" height="9" fill="#ffff00" />
<rect x="496" y="392" width="4" height="1" fill="url(#gY)" />
<rect x="504" y="389" width="1" height="10" fill="#ff0000" />
<rect x="502" y="392" width="4" height="7" fill="url(#gR)" />
<rect x="502" y="398" width="5" height="1" fill="#ff0000" />
<rect x="510" y="396" width="1" height="9" fill="#ff0000" />
<rect x="508" y="398" width="4" height="7" fill="url(#gR)" />
<rect x="508" y="404" width="5" height="1" fill="#ff0000" />
<rect x="516" y="397" width="1" height="16" fill="#00ff00" />
<rect x="514" y="399" width="4" height="6" fill="url(#gG)" />
<rect x="514" y="399" width="5" height="1" fill="#00ff00" />
<rect x="522" y="398" width="1" height="3" fill="#ff0000" />
<rect x="520" y="398" width="4" height="3" fill="url(#gR)" />
<rect x="520" y="400" width="5" height="1" fill="#ff0000" />
<rect x="528" y="379" width="1" height="20" fill="#00ff00" />
<rect x="526" y="381" width="4" height="18" fill="url(#gG)" />
<rect x="526" y="381" width="5" height="1" fill="#00ff00" />
<rect x="534" y="363" width="1" height="19" fill="#00ff00" />
<rect x="532" y="376" width="4" height="5" fill="url(#gG)" />
<rect x="532" y="376" width="5" height="1" fill="#00ff00" />
<rect x="540" y="369" width="1" height="19" fill="#ff0000" />
<rect x="538" y="374" width="4" height="11" fill="url(#gR)" />
<rect x="538" y="384" width="5" height="1" fill="#ff0000" />
<rect x="546" y="374" width="1" height="13" fill="#ff0000" />
<rect x="544" y="384" width="4" height="3" fill="url(#gR)" />
<rect x="544" y="386" width="5" height="1" fill="#ff0000" />
<rect x="552" y="382" width="1" height="14" fill="#ff0000" />
<rect x="550" y="389" width="4" height="3" fill="url(#gR)" />
<rect x="550" y="391" width="5" height="1" fill="#ff0000" />
<rect x="558" y="385" width="1" height="7" fill="#00ff00" />
<rect x="556" y="390" width="4" height="1" fill="url(#gG)" />
<rect x="556" y="390" width="5" height="1" fill="#00ff00" />
<rect x="564" y="386" width="1" height="6" fill="#ffff00" />
<rect x="562" y="390" width="4" height="1" fill="url(#gY)" />
<rect x="570" y="389" width="1" height="33" fill="#ff0000" />
<rect x="568" y="389" width="4" height="28" fill="url(#gR)" />
<rect x="568" y="416" width="5" height="1" fill="#ff0000" />
<rect x="576" y="416" width="1" height="18" fill="#ff0000" />
<rect x="574" y="418" width="4" height="8" fill="url(#gR)" />
<rect x="574" y="425" width="5" height="1" fill="#ff0000" />
<rect x="582" y="407" width="1" height="21" fill="#00ff00" />
<rect x="580" y="417" width="4" height="11" fill="url(#gG)" />
<rect x="580" y="417" width="5" height="1" fill="#00ff00" />
<rect x="588" y="402" width="1" height="14" fill="#00ff00" />
<rect x="586" y="403" width="4" height="13" fill="url(#gG)" />
<rect x="586" y="403" width="5" height="1" fill="#00ff00" />
<rect x="594" y="397" width="1" height="10" fill="#ff0000" />
<rect x="592" y="403" width="4" height="2" fill="url(#gR)" />
<rect x="592" y="404" width="5" height="1" fill="#ff0000" />
<rect x="600" y="389" width="1" height="15" fill="#00ff00" />
<rect x="598" y="390" width="4" height="14" fill="url(#gG)" />
<rect x="598" y="390" width="5" height="1" fill="#00ff00" />
<rect x="606" y="383" width="1" height="9" fill="#ff0000" />
<rect x="604" y="390" width="4" height="2" fill="url(#gR)" />
<rect x="604" y="391" width="5" height="1" fill="#ff0000" />
<rect x="612" y="349" width="1" height="30" fill="#00ff00" />
<rect x="610" y="373" width="4" height="1" fill="url(#gG)" />
<rect x="610" y="373" width="5" height="1" fill="#00ff00" />
<rect x="618" y="352" width="1" height="32" fill="#00ff00" />
<rect x="616" y="354" width="4" height="18" fill="url(#gG)" />
<rect x="616" y="354" width="5" height="1" fill="#00ff00" />
<rect x="624" y="323" width="1" height="34" fill="#00ff00" />
<rect x="622" y="329" width="4" height="24" fill="url(#gG)" />
<rect x="622" y="329" width="5" height="1" fill="#00ff00" />
<rect x="630" y="326" width="1" height="25" fill="#ff0000" />
<rect x="628" y="328" width="4" height="12" fill="url(#gR)" />
<rect x="628" y="339" width="5" height="1" fill="#ff0000" />
<rect x="636" y="284" width="1" height="55" fill="#00ff00" />
<rect x="634" y="306" width="4" height="33" fill="url(#gG)" />
<rect x="634" y="306" width="5" height="1" fill="#00ff00" />
<rect x="642" y="305" width="1" height="41" fill="#ff0000" />
<rect x="640" y="311" width="4" height="15" fill="url(#gR)" />
<rect x="640" y="325" width="5" height="1" fill="#ff0000" />
<rect x="648" y="291" width="1" height="48" fill="#ff0000" />
<rect x="646" y="328" width="4" height="10" fill="url(#gR)" />
<rect x="646" y="337" width="5" height="1" fill="#ff0000" />
<rect x="654" y="325" width="1" height="37" fill="#ff0000" />
<rect x="652" y="336" width="4" height="10" fill="url(#gR)" />
<rect x="652" y="345" width="5" height="1" fill="#ff0000" />
<rect x="660" y="343" width="1" height="17" fill="#ff0000" />
<rect x="658" y="344" width="4" height="16" fill="url(#gR)" />
<rect x="658" y="359" width="5" height="1" fill="#ff0000" />
<rect x="666" y="352" width="1" height="32" fill="#ff0000" />
<rect x="664" y="357" width="4" height="17" fill="url(#gR)" />
<rect x="664" y="373" width="5" height="1" fill="#ff0000" />
<rect x="672" y="373" width="1" height="10" fill="#00ff00" />
<rect x="670" y="373" width="4" height="6" fill="url(#gG)" />
<rect x="670" y="373" width="5" height="1" fill="#00ff00" />
<rect x="678" y="355" width="1" height="19" fill="#00ff00" />
<rect x="676" y="360" width="4" height="12" fill="url(#gG)" />
<rect x="676" y="360" width="5" height="1" fill="#00ff00" />
<rect x="684" y="349" width="1" height="15" fill="#00ff00" />
<rect x="682" y="351" width="4" height="8" fill="url(#gG)" />
<rect x="682" y="351" width="5" height="1" fill="#00ff00" />
<rect x="690" y="348" width="1" height="17" fill="#ff0000" />
<rect x="688" y="351" width="4" height="10" fill="url(#gR)" />
<rect x="688" y="360" width="5" height="1" fill="#ff0000" />
<rect x="696" y="357" width="1" height="33" fill="#ff0000" />
<rect x="694" y="361" width="4" height="24" fill="url(#gR)" />
<rect x="694" y="384" width="5" height="1" fill="#ff0000" />
<rect x="702" y="375" width="1" height="24" fill="#00ff00" />
<rect x="700" y="376" width="4" height="13" fill="url(#gG)" />
<rect x="700" y="376" width="5" height="1" fill="#00ff00" />
<rect x="708" y="357" width="1" height="48" fill="#ff0000" />
<rect x="706" y="374" width="4" height="28" fill="url(#gR)" />
<rect x="706" y="401" width="5" height="1" fill="#ff0000" />
<rect x="714" y="402" width="1" height="54" fill="#ff0000" />
<rect x="712" y="408" width="4" height="26" fill="url(#gR)" />
<rect x="712" y="433" width="5" height="1" fill="#ff0000" />
<rect x="720" y="422" width="1" height="28" fill="#00ff00" />
<rect x="718" y="433" width="4" height="1" fill="url(#gR)" />
<rect x="718" y="433" width="5" height="1" fill="#ff0000" />
<rect x="726" y="431" width="1" height="10" fill="#ff0000" />
<rect x="724" y="437" width="4" height="2" fill="url(#gG)" />
<rect x="724" y="437" width="5" height="1" fill="#00ff00" />
<rect x="732" y="424" width="1" height="12" fill="#00ff00" />
<rect x="730" y="424" width="4" height="12" fill="url(#gG)" />
<rect x="730" y="424" width="5" height="1" fill="#00ff00" />
<rect x="738" y="407" width="1" height="31" fill="#00ff00" />
<rect x="736" y="415" width="4" height="17" fill="url(#gG)" />
<rect x="736" y="415" width="5" height="1" fill="#00ff00" />
<rect x="744" y="404" width="1" height="18" fill="#00ff00" />
<rect x="742" y="413" width="4" height="6" fill="url(#gG)" />
<rect x="742" y="413" width="5" height="1" fill="#00ff00" />
<rect x="750" y="390" width="1" height="24" fill="#00ff00" />
<rect x="748" y="398" width="4" height="16" fill="url(#gG)" />
<rect x="748" y="398" width="5" height="1" fill="#00ff00" />
<rect x="756" y="381" width="1" height="21" fill="#00ff00" />
<rect x="754" y="393" width="4" height="8" fill="url(#gG)" />
<rect x="754" y="393" width="5" height="1" fill="#00ff00" />
<rect x="762" y="395" width="1" height="14" fill="#ff0000" />
<rect x="760" y="396" width="4" height="7" fill="url(#gR)" />
<rect x="760" y="402" width="5" height="1" fill="#ff0000" />
<rect x="768" y="385" width="1" height="22" fill="#ff0000" />
<rect x="766" y="402" width="4" height="3" fill="url(#gR)" />
<rect x="766" y="404" width="5" height="1" fill="#ff0000" />
<rect x="774" y="400" width="1" height="15" fill="#ff0000" />
<rect x="772" y="400" width="4" height="12" fill="url(#gR)" />
<rect x="772" y="411" width="5" height="1" fill="#ff0000" />
<rect x="780" y="403" width="1" height="12" fill="#ff0000" />
<rect x="778" y="408" width="4" height="6" fill="url(#gR)" />
<rect x="778" y="413" width="5" height="1" fill="#ff0000" />
<rect x="786" y="411" width="1" height="28" fill="#ff0000" />
<rect x="784" y="412" width="4" height="24" fill="url(#gR)" />
<rect x="784" y="435" width="5" height="1" fill="#ff0000" />
<rect x="792" y="433" width="1" height="8" fill="#00ff00" />
<rect x="790" y="437" width="4" height="3" fill="url(#gG)" />
<rect x="790" y="437" width="5" height="1" fill="#00ff00" />
<rect x="798" y="434" width="1" height="10" fill="#ff0000" />
<rect x="796" y="437" width="4" height="7" fill="url(#gR)" />
<rect x="796" y="443" width="5" height="1" fill="#ff0000" />
<rect x="804" y="444" width="1" height="32" fill="#ff0000" />
<rect x="802" y="445" width="4" height="25" fill="url(#gR)" />
<rect x="802" y="469" width="5" height="1" fill="#ff0000" />
<rect x="810" y="463" width="1" height="11" fill="#00ff00" />
<rect x="808" y="468" width="4" height="1" fill="url(#gR)" />
<rect x="808" y="468" width="5" height="1" fill="#ff0000" />
<rect x="816" y="466" width="1" height="11" fill="#ff0000" />
<rect x="814" y="467" width="4" height="10" fill="url(#gR)" />
<rect x="814" y="476" width="5" height="1" fill="#ff0000" />
<rect x="822" y="473" width="1" height="15" fill="#ff0000" />
<rect x="820" y="479" width="4" height="9" fill="url(#gR)" />
<rect x="820" y="487" width="5" height="1" fill="#ff0000" />
<rect x="828" y="482" width="1" height="9" fill="#00ff00" />
<rect x="826" y="485" width="4" height="1" fill="url(#gG)" />
<rect x="826" y="485" width="5" height="1" fill="#00ff00" />
<rect x="834" y="482" width="1" height="13" fill="#ff0000" />
<rect x="832" y="484" width="4" height="7" fill="url(#gR)" />
<rect x="832" y="490" width="5" height="1" fill="#ff0000" />
<rect x="840" y="486" width="1" height="14" fill="#ff0000" />
<rect x="838" y="490" width="4" height="6" fill="url(#gR)" />
<rect x="838" y="495" width="5" height="1" fill="#ff0000" />
<rect x="846" y="493" width="1" height="8" fill="#ff0000" />
<rect x="844" y="494" width="4" height="5" fill="url(#gR)" />
<rect x="844" y="498" width="5" height="1" fill="#ff0000" />
<rect x="852" y="476" width="1" height="22" fill="#00ff00" />
<rect x="850" y="488" width="4" height="10" fill="url(#gG)" />
<rect x="850" y="488" width="5" height="1" fill="#00ff00" />
<rect x="858" y="480" width="1" height="8" fill="#00ff00" />
<rect x="856" y="482" width="4" height="6" fill="url(#gG)" />
<rect x="856" y="482" width="5" height="1" fill="#00ff00" />
<rect x="864" y="473" width="1" height="9" fill="#00ff00" />
<rect x="862" y="474" width="4" height="8" fill="url(#gG)" />
<rect x="862" y="474" width="5" height="1" fill="#00ff00" />
<rect x="870" y="468" width="1" height="10" fill="#ff0000" />
<rect x="868" y="475" width="4" height="3" fill="url(#gR)" />
<rect x="868" y="477" width="5" height="1" fill="#ff0000" />
<rect x="876" y="471" width="1" height="8" fill="#00ff00" />
<rect x="874" y="475" width="4" height="1" fill="url(#gG)" />
<rect x="874" y="475" width="5" height="1" fill="#00ff00" />
<rect x="882" y="465" width="1" height="8" fill="#00ff00" />
<rect x="880" y="470" width="4" height="3" fill="url(#gG)" />
<rect x="880" y="470" width="5" height="1" fill="#00ff00" />
<rect x="888" y="466" width="1" height="8" fill="#00ff00" />
<rect x="886" y="469" width="4" height="1" fill="url(#gG)" />
<rect x="886" y="469" width="5" height="1" fill="#00ff00" />
<rect x="894" y="463" width="1" height="9" fill="#ff0000" />
<rect x="892" y="469" width="4" height="3" fill="url(#gR)" />
<rect x="892" y="471" width="5" height="1" fill="#ff0000" />
<rect x="900" y="463" width="1" height="8" fill="#00ff00" />
<rect x="898" y="465" width="4" height="6" fill="url(#gG)" />
<rect x="898" y="465" width="5" height="1" fill="#00ff00" />
<rect x="906" y="461" width="1" height="7" fill="#ff0000" />
<rect x="904" y="463" width="4" height="5" fill="url(#gR)" />
<rect x="904" y="467" width="5" height="1" fill="#ff0000" />
<rect x="912" y="463" width="1" height="6" fill="#00ff00" />
<rect x="910" y="466" width="4" height="1" fill="url(#gG)" />
<rect x="910" y="466" width="5" height="1" fill="#00ff00" />
<rect x="918" y="457" width="1" height="9" fill="#00ff00" />
<rect x="916" y="459" width="4" height="7" fill="url(#gG)" />
<rect x="916" y="459" width="5" height="1" fill="#00ff00" />
<rect x="924" y="456" width="1" height="11" fill="#ff0000" />
<rect x="922" y="458" width="4" height="9" fill="url(#gR)" />
<rect x="922" y="466" width="5" height="1" fill="#ff0000" />
<rect x="930" y="456" width="1" height="13" fill="#00ff00" />
<rect x="928" y="461" width="4" height="7" fill="url(#gG)" />
<rect x="928" y="461" width="5" height="1" fill="#00ff00" />
<rect x="936" y="437" width="1" height="26" fill="#00ff00" />
<rect x="934" y="442" width="4" height="21" fill="url(#gG)" />
<rect x="934" y="442" width="5" height="1" fill="#00ff00" />
<rect x="942" y="428" width="1" height="17" fill="#ff0000" />
<rect x="940" y="441" width="4" height="4" fill="url(#gR)" />
<rect x="940" y="444" width="5" height="1" fill="#ff0000" />
<rect x="948" y="436" width="1" height="12" fill="#ff0000" />
<rect x="946" y="445" width="4" height="3" fill="url(#gR)" />
<rect x="946" y="447" width="5" height="1" fill="#ff0000" />
<rect x="954" y="446" width="1" height="26" fill="#ff0000" />
<rect x="952" y="448" width="4" height="20" fill="url(#gR)" />
<rect x="952" y="467" width="5" height="1" fill="#ff0000" />
<rect x="960" y="466" width="1" height="12" fill="#ff0000" />
<rect x="958" y="468" width="4" height="8" fill="url(#gR)" />
<rect x="958" y="475" width="5" height="1" fill="#ff0000" />
<rect x="966" y="473" width="1" height="3" fill="#ff0000" />
<rect x="964" y="473" width="4" height="3" fill="url(#gR)" />
<rect x="964" y="475" width="5" height="1" fill="#ff0000" />
<rect x="972" y="465" width="1" height="13" fill="#00ff00" />
<rect x="970" y="467" width="4" height="9" fill="url(#gG)" />
<rect x="970" y="467" width="5" height="1" fill="#00ff00" />
<rect x="978" y="466" width="1" height="2" fill="#00ff00" />
<rect x="976" y="466" width="4" height="1" fill="url(#gG)" />
<rect x="976" y="466" width="5" height="1" fill="#00ff00" />
<rect x="984" y="463" width="1" height="3" fill="#00ff00" />
<rect x="982" y="465" width="4" height="1" fill="url(#gG)" />
<rect x="982" y="465" width="5" height="1" fill="#00ff00" />
<rect x="990" y="465" width="1" height="4" fill="#ffff00" />
<rect x="988" y="465" width="4" height="1" fill="url(#gY)" />
<rect x="996" y="462" width="1" height="6" fill="#ff0000" />
<rect x="994" y="465" width="4" height="2" fill="url(#gR)" />
<rect x="994" y="466" width="5" height="1" fill="#ff0000" />
<rect x="1002" y="459" width="1" height="7" fill="#00ff00" />
<rect x="1000" y="461" width="4" height="5" fill="url(#gG)" />
<rect x="1000" y="461" width="5" height="1" fill="#00ff00" />
<rect x="1008" y="460" width="1" height="7" fill="#ff0000" />
<rect x="1006" y="461" width="4" height="6" fill="url(#gR)" />
<rect x="1006" y="466" width="5" height="1" fill="#ff0000" />
<rect x="1014" y="467" width="1" height="5" fill="#ff0000" />
<rect x="1012" y="467" width="4" height="1" fill="url(#gR)" />
<rect x="1012" y="467" width="5" height="1" fill="#ff0000" />
<rect x="1020" y="465" width="1" height="5" fill="#00ff00" />
<rect x="1018" y="467" width="4" height="1" fill="url(#gG)" />
<rect x="1018" y="467" width="5" height="1" fill="#00ff00" />
<rect x="1026" y="464" width="1" height="5" fill="#ff0000" />
<rect x="1024" y="467" width="4" height="2" fill="url(#gR)" />
<rect x="1024" y="468" width="5" height="1" fill="#ff0000" />
<rect x="1032" y="466" width="1" height="6" fill="#ff0000" />
<rect x="1030" y="467" width="4" height="1" fill="url(#gR)" />
<rect x="1030" y="467" width="5" height="1" fill="#ff0000" />
<rect x="1038" y="466" width="1" height="4" fill="#00ff00" />
<rect x="1036" y="468" width="4" height="1" fill="url(#gG)" />
<rect x="1036" y="468" width="5" height="1" fill="#00ff00" />
<rect x="1044" y="466" width="1" height="4" fill="#ff0000" />
<rect x="1042" y="468" width="4" height="2" fill="url(#gR)" />
<rect x="1042" y="469" width="5" height="1" fill="#ff0000" />
<rect x="1050" y="468" width="1" height="6" fill="#ff0000" />
<rect x="1048" y="469" width="4" height="4" fill="url(#gR)" />
<rect x="1048" y="472" width="5" height="1" fill="#ff0000" />
<rect x="1056" y="470" width="1" height="2" fill="#00ff00" />
<rect x="1054" y="470" width="4" height="2" fill="url(#gG)" />
<rect x="1054" y="470" width="5" height="1" fill="#00ff00" />
<rect x="1062" y="468" width="1" height="4" fill="#ff0000" />
<rect x="1060" y="470" width="4" height="2" fill="url(#gR)" />
<rect x="1060" y="471" width="5" height="1" fill="#ff0000" />
<rect x="1068" y="468" width="1" height="6" fill="#ff0000" />
<rect x="1066" y="470" width="4" height="4" fill="url(#gR)" />
<rect x="1066" y="473" width="5" height="1" fill="#ff0000" />
<rect x="1074" y="461" width="1" height="13" fill="#00ff00" />
<rect x="1072" y="466" width="4" height="8" fill="url(#gG)" />
<rect x="1072" y="466" width="5" height="1" fill="#00ff00" />
<rect x="1080" y="464" width="1" height="6" fill="#ff0000" />
<rect x="1078" y="467" width="4" height="3" fill="url(#gR)" />
<rect x="1078" y="469" width="5" height="1" fill="#ff0000" />
<rect x="1086" y="468" width="1" height="3" fill="#ff0000" />
<rect x="1084" y="470" width="4" height="1" fill="url(#gR)" />
<rect x="1084" y="470" width="5" height="1" fill="#ff0000" />
<rect x="1092" y="469" width="1" height="2" fill="#ffff00" />
<rect x="1090" y="470" width="4" height="1" fill="url(#gY)" />
<rect x="1098" y="466" width="1" height="5" fill="#ff0000" />
<rect x="1096" y="469" width="4" height="2" fill="url(#gR)" />
<rect x="1096" y="470" width="5" height="1" fill="#ff0000" />
<rect x="1104" y="470" width="1" height="2" fill="#ff0000" />
<rect x="1102" y="471" width="4" height="1" fill="url(#gR)" />
<rect x="1102" y="471" width="5" height="1" fill="#ff0000" />
<rect x="1110" y="471" width="1" height="4" fill="#ff0000" />
<rect x="1108" y="472" width="4" height="3" fill="url(#gR)" />
<rect x="1108" y="474" width="5" height="1" fill="#ff0000" />
<rect x="1116" y="474" width="1" height="2" fill="#ff0000" />
<rect x="1114" y="474" width="4" height="2" fill="url(#gR)" />
<rect x="1114" y="475" width="5" height="1" fill="#ff0000" />
<rect x="1122" y="471" width="1" height="5" fill="#00ff00" />
<rect x="1120" y="474" width="4" height="1" fill="url(#gG)" />
<rect x="1120" y="474" width="5" height="1" fill="#00ff00" />
<rect x="1128" y="466" width="1" height="8" fill="#00ff00" />
<rect x="1126" y="471" width="4" height="3" fill="url(#gG)" />
<rect x="1126" y="471" width="5" height="1" fill="#00ff00" />
<rect x="1134" y="462" width="1" height="9" fill="#ff0000" />
<rect x="1132" y="470" width="4" height="1" fill="url(#gR)" />
<rect x="1132" y="470" width="5" height="1" fill="#ff0000" />
<rect x="1140" y="468" width="1" height="3" fill="#ffff00" />
<rect x="1138" y="470" width="4" height="1" fill="url(#gY)" />
<rect x="1146" y="468" width="1" height="3" fill="#ffff00" />
<rect x="1144" y="470" width="4" height="1" fill="url(#gY)" />
<rect x="1152" y="469" width="1" height="2" fill="#ffff00" />
<rect x="1150" y="470" width="4" height="1" fill="url(#gY)" />
<rect x="1158" y="463" width="1" height="7" fill="#00ff00" />
<rect x="1156" y="465" width="4" height="5" fill="url(#gG)" />
<rect x="1156" y="465" width="5" height="1" fill="#00ff00" />
<rect x="1164" y="460" width="1" height="8" fill="#ff0000" />
<rect x="1162" y="465" width="4" height="1" fill="url(#gR)" />
<rect x="1162" y="465" width="5" height="1" fill="#ff0000" />
<rect x="1170" y="450" width="1" height="18" fill="#00ff00" />
<rect x="1168" y="464" width="4" height="4" fill="url(#gG)" />
<rect x="1168" y="464" width="5" height="1" fill="#00ff00" />
<rect x="1176" y="463" width="1" height="6" fill="#ff0000" />
<rect x="1174" y="464" width="4" height="5" fill="url(#gR)" />
<rect x="1174" y="468" width="5" height="1" fill="#ff0000" />
<rect x="1182" y="466" width="1" height="4" fill="#ff0000" />
<rect x="1180" y="468" width="4" height="2" fill="url(#gR)" />
<rect x="1180" y="469" width="5" height="1" fill="#ff0000" />
<rect x="1188" y="469" width="1" height="6" fill="#ff0000" />
<rect x="1186" y="470" width="4" height="5" fill="url(#gR)" />
<rect x="1186" y="474" width="5" height="1" fill="#ff0000" />
<rect x="1194" y="473" width="1" height="6" fill="#ff0000" />
<rect x="1192" y="473" width="4" height="6" fill="url(#gR)" />
<rect x="1192" y="478" width="5" height="1" fill="#ff0000" />
<rect x="1200" y="478" width="1" height="6" fill="#00ff00" />
<rect x="1198" y="480" width="4" height="2" fill="url(#gG)" />
<rect x="1198" y="480" width="5" height="1" fill="#00ff00" />
<rect x="1206" y="465" width="1" height="15" fill="#00ff00" />
<rect x="1204" y="472" width="4" height="8" fill="url(#gG)" />
<rect x="1204" y="472" width="5" height="1" fill="#00ff00" />
<rect x="1212" y="465" width="1" height="7" fill="#ff0000" />
<rect x="1210" y="470" width="4" height="2" fill="url(#gR)" />
<rect x="1210" y="471" width="5" height="1" fill="#ff0000" />
<rect x="1218" y="473" width="1" height="2" fill="#ff0000" />
<rect x="1216" y="473" width="4" height="2" fill="url(#gR)" />
<rect x="1216" y="474" width="5" height="1" fill="#ff0000" />
<rect x="1224" y="473" width="1" height="1" fill="#00ff00" />
<rect x="1222" y="473" width="4" height="1" fill="url(#gG)" />
<rect x="1222" y="473" width="5" height="1" fill="#00ff00" />
<rect x="1230" y="461" width="1" height="10" fill="#00ff00" />
<rect x="1228" y="465" width="4" height="6" fill="url(#gG)" />
<rect x="1228" y="465" width="5" height="1" fill="#00ff00" />
<rect x="1236" y="450" width="1" height="16" fill="#ff0000" />
<rect x="1234" y="464" width="4" height="2" fill="url(#gR)" />
<rect x="1234" y="465" width="5" height="1" fill="#ff0000" />
<rect x="1242" y="466" width="1" height="13" fill="#ff0000" />
<rect x="1240" y="468" width="4" height="11" fill="url(#gR)" />
<rect x="1240" y="478" width="5" height="1" fill="#ff0000" />
<rect x="1248" y="472" width="1" height="6" fill="#00ff00" />
<rect x="1246" y="476" width="4" height="2" fill="url(#gG)" />
<rect x="1246" y="476" width="5" height="1" fill="#00ff00" />
<rect x="1254" y="455" width="1" height="21" fill="#00ff00" />
<rect x="1252" y="458" width="4" height="18" fill="url(#gG)" />
<rect x="1252" y="458" width="5" height="1" fill="#00ff00" />
<rect x="1260" y="440" width="1" height="23" fill="#00ff00" />
<rect x="1258" y="441" width="4" height="19" fill="url(#gG)" />
<rect x="1258" y="441" width="5" height="1" fill="#00ff00" />
<line x1="20" y1="283.5" x2="1296" y2="283.5" stroke="#ff0000" style="mix-blend-mode:difference"/>
<line x1="20" y1="347.5" x2="1296" y2="347.5" stroke="#ff0000" style="mix-blend-mode:difference"/>
<line x1="20" y1="428.5" x2="1296" y2="428.5" stroke="#ff0000" style="mix-blend-mode:difference"/>
<line x1="1074.5" y1="61" x2="1074.5" y2="525" stroke="#ff0000" />
<line x1="342.5" y1="83" x2="342.5" y2="524" stroke="#ffee00" stroke-dasharray="3 3" stroke-dashoffset="0"/>
<line x1="342.5" y1="533" x2="342.5" y2="593" stroke="#ffee00" stroke-dasharray="3 3" stroke-dashoffset="0"/>
<line x1="342.5" y1="600" x2="342.5" y2="668" stroke="#ffee00" stroke-dasharray="3 3" stroke-dashoffset="1"/>
<line x1="342.5" y1="673" x2="342.5" y2="731" stroke="#ffee00" stroke-dasharray="3 3" stroke-dashoffset="2"/>
<line x1="348.5" y1="83" x2="348.5" y2="524" stroke="#00e000" stroke-dasharray="3 3" stroke-dashoffset="0"/>
<line x1="348.5" y1="533" x2="348.5" y2="593" stroke="#00e000" stroke-dasharray="3 3" stroke-dashoffset="0"/>
<line x1="348.5" y1="600" x2="348.5" y2="668" stroke="#00e000" stroke-dasharray="3 3" stroke-dashoffset="1"/>
<line x1="348.5" y1="673" x2="348.5" y2="731" stroke="#00e000" stroke-dasharray="3 3" stroke-dashoffset="2"/>
<line x1="654.5" y1="83" x2="654.5" y2="524" stroke="#ffee00" stroke-dasharray="3 3" stroke-dashoffset="0"/>
<line x1="654.5" y1="533" x2="654.5" y2="593" stroke="#ffee00" stroke-dasharray="3 3" stroke-dashoffset="0"/>
<line x1="654.5" y1="600" x2="654.5" y2="668" stroke="#ffee00" stroke-dasharray="3 3" stroke-dashoffset="1"/>
<line x1="654.5" y1="673" x2="654.5" y2="731" stroke="#ffee00" stroke-dasharray="3 3" stroke-dashoffset="2"/>
<line x1="966.5" y1="83" x2="966.5" y2="524" stroke="#ffee00" stroke-dasharray="3 3" stroke-dashoffset="0"/>
<line x1="966.5" y1="533" x2="966.5" y2="593" stroke="#ffee00" stroke-dasharray="3 3" stroke-dashoffset="0"/>
<line x1="966.5" y1="600" x2="966.5" y2="668" stroke="#ffee00" stroke-dasharray="3 3" stroke-dashoffset="1"/>
<line x1="966.5" y1="673" x2="966.5" y2="731" stroke="#ffee00" stroke-dasharray="3 3" stroke-dashoffset="2"/>
<polyline points="324.3,225 326,234 327,242 328,260 329.4,268.7 332,276.5 334.6,283.5 338,289.6 343.3,294.8 348.5,300 354,304.4 364.2,305.3 393.8,305.6 394.7,306.3 405,306 406,305.3 414.7,305.3 420,309.6 426,315.7 429.5,322.7 433.8,330.5 439,334.9 445,341.8 451,347.9 455.4,356.6 462.4,365.3 469.3,370.2 478,371.8 495.5,373.1 512.9,372.8 521.6,374.5 528.6,373.1 537.3,370.5 549.5,370.2 565.1,371 572.1,367 577.3,364.4 584.3,367 593,369.7 605.2,371.8 612.2,368.8 619.1,359.2 626.1,345.3 634.8,326.1 640,316.5 647,309.6 654.8,306.2 670.5,304.8 679.2,302.2 687,301.3 693.1,304 701.9,309.2 708.8,309.2 717.5,302.2 726.2,295.3 733.2,293 740.2,294.9 750.6,304 759.3,320.5 768,333.6 775,341.4 782.8,346.6 792.4,350.1 801.1,358.8 811.6,369.3 820.3,373.3 827.2,375.4 836,372.8 846.4,369.3 853.4,370.7 860,375.4 868.9,385 874.2,392 881.1,402.4 888.1,414.6 893.3,425 898.5,435.5 905.5,444.2 912.5,451.2 917.7,454.7 925,454.6 931,453.4 937,446.3 943,441.5 947.6,439.5 955,439.8 964.2,443 976.2,445.5 1042.5,445.5 1051.5,446.6 1057.6,451.6 1068.1,461.3 1075.6,461.8 1095.2,462.4 1117.8,463.2 1125.4,465.6 1135,466.2 1150,467 1157.7,465.1 1169.7,464.5 1195.3,464 1225.5,463.3 1231.5,461.5 1249.6,461 1255.6,458 1260.4,452" fill="none" stroke="#ff00ff" stroke-width="1" />
<polyline points="324,335 329.4,343.6 334.6,348.8 343.3,351.4 353.8,355.8 364.2,358.4 371.2,359.6 393,359.3 406,358.4 413,361 423.4,366.2 433.8,372.3 438,375.2 448.4,378.4 458.9,381.9 472.8,384.8 490.2,385.7 507.7,388.3 521.6,390.6 533.8,387.9 559.9,388.8 572.1,390.2 582.5,394 594.7,396.7 605.2,397.5 613.9,395.8 622.6,392.3 633,385.3 643.5,379.2 654.8,375.4 665.3,373.6 677.5,371 689.7,365.8 698.4,363.2 707.1,362.3 715.8,364 724.5,367.9 734.9,371 745.4,378 755.8,384.1 769.7,392 783.6,399.8 794,405.9 804.5,413.7 814.9,423.3 823.7,431.2 832.4,436.4 844.6,441.6 856.7,448.6 867.2,454.7 877.6,461.3 888.1,466 896.8,470.3 905.5,473.8 916,477.3 926.4,477.3 937,474.2 952.1,469.6 964.2,467.1 976.2,465.6 988.3,464.4 1003.3,463.2 1036.5,463.3 1045.5,464.7 1060.6,466.6 1069.6,469.2 1090.7,468.9 1105.8,469.6 1117.8,470.4 1135,471.1 1165.2,471.1 1183.3,470.5 1205.9,470.8 1210.4,472.3 1225.5,472.6 1230,470.8 1255.6,470.8 1260.4,469" fill="none" stroke="#ff00ff" stroke-width="1" />
<polyline points="324.4,447.5 327,435.3 328.7,424 331.3,416.1 335.7,410.9 343.5,408.6 350.5,408.3 361,409.5 371.4,414.4 378.4,412.3 385.3,413.2 394,411.2 402.8,410.4 413.2,417 425.4,420.5 432.4,413.5 449.8,412.3 456.7,404.8 463.7,400.4 472.4,398.4 489.8,398.4 500.3,400.4 509,403.9 521.2,407.4 529.9,406.5 540,405.7 559.9,405.4 565.1,405.4 570.4,411.5 577.3,420.2 584.3,422.3 609.8,422.3 614.9,424.8 618.9,428.3 623,433.5 629.8,436.1 634.4,441.5 640.2,444.6 654.5,444.6 663.1,442.6 674.6,440.3 683.8,437.5 691.8,428.3 697.6,420.8 702.7,415.4 708.5,415.4 714.8,423.7 720.5,431.7 726.3,440.3 735.4,449.5 743.5,455.8 749.2,457.6 759.2,452.9 769.7,449.8 778.4,449.8 787,453.8 797.5,460.8 808,470.3 818.4,481.7 828.9,494.7 839.3,506.9 848,517.4 856.7,523 866,525.5 872,525.8 877.6,525 888.1,520 896.8,512.1 905.5,505.2 914.2,500.5 924.7,498.2 931.6,499.1 936.9,502 943,503 950,502 953.6,500 959.6,496 965.7,491.2 974.7,487.3 992.8,482.7 1009.4,481.2 1024.4,482.4 1048.5,483.6 1053,483.2 1060.6,479.1 1068.1,476 1081.7,474.6 1095.2,474.9 1105.8,475.2 1114.8,476.4 1166.7,476.4 1169.7,477.6 1190.8,477.9 1199.8,480.6 1252.6,480.9 1255.6,482.9 1260.4,486.6" fill="none" stroke="#ff00ff" stroke-width="1" />
<polyline points="805,377.5 816.8,382.3 829,386.3 842.9,389.8 860,392.8 874.2,396.3 909,402.4 933.4,406.8 966.4,412.4 1015.4,419.9 1074.4,427.9 1135,436 1180.3,441.7 1231.5,449 1260.4,455.4" fill="none" stroke="#ffff00" stroke-width="1" />
<line x1="846" y1="501" x2="1205" y2="484.8" stroke="#ff0000"/>
<line x1="1201" y1="485" x2="1252" y2="482" stroke="#ff0000" stroke-width="2" stroke-dasharray="9 4"/>
<line x1="1239" y1="483.8" x2="1296" y2="480.4" stroke="#ff0000"/>
<line x1="1234" y1="481.3" x2="1292" y2="475.8" stroke="#ff0000"/>
<line x1="1170" y1="450.6" x2="1296" y2="448.5" stroke="#ff0000"/>
<line x1="1264" y1="441.5" x2="1295" y2="441.5" stroke="#00ff00" />
<rect x="209" y="593" width="3" height="1" fill="#00ff00" />
<rect x="215" y="576" width="3" height="18" fill="#ff0000" />
<rect x="221" y="588" width="3" height="6" fill="#ff0000" />
<rect x="227" y="585" width="3" height="9" fill="#ff0000" />
<rect x="233" y="590" width="3" height="4" fill="#ff0000" />
<rect x="239" y="589" width="3" height="5" fill="#ff0000" />
<rect x="245" y="575" width="3" height="19" fill="#00ff00" />
<rect x="251" y="588" width="3" height="6" fill="#ff0000" />
<rect x="257" y="588" width="3" height="6" fill="#ff0000" />
<rect x="263" y="585" width="3" height="9" fill="#00ff00" />
<rect x="269" y="589" width="3" height="5" fill="#ff0000" />
<rect x="275" y="588" width="3" height="6" fill="#ff0000" />
<rect x="281" y="589" width="3" height="5" fill="#00ff00" />
<rect x="287" y="589" width="3" height="5" fill="#00ff00" />
<rect x="293" y="565" width="3" height="29" fill="#00ff00" />
<rect x="299" y="573" width="3" height="21" fill="#00ff00" />
<rect x="305" y="577" width="3" height="17" fill="#ff0000" />
<rect x="311" y="570" width="3" height="24" fill="#00ff00" />
<rect x="317" y="579" width="3" height="15" fill="#ff0000" />
<rect x="323" y="579" width="3" height="15" fill="#00ff00" />
<rect x="329" y="589" width="3" height="5" fill="#ff0000" />
<rect x="335" y="588" width="3" height="6" fill="#00ff00" />
<rect x="341" y="588" width="3" height="6" fill="#ff0000" />
<rect x="347" y="580" width="3" height="14" fill="#ff0000" />
<rect x="353" y="586" width="3" height="8" fill="#ff0000" />
<rect x="359" y="591" width="3" height="3" fill="#ff0000" />
<rect x="365" y="590" width="3" height="4" fill="#ff0000" />
<rect x="371" y="590" width="3" height="4" fill="#00ff00" />
<rect x="377" y="585" width="3" height="9" fill="#00ff00" />
<rect x="383" y="591" width="3" height="3" fill="#ff0000" />
<rect x="389" y="591" width="3" height="3" fill="#00ff00" />
<rect x="395" y="589" width="3" height="5" fill="#00ff00" />
<rect x="401" y="591" width="3" height="3" fill="#ff0000" />
<rect x="407" y="591" width="3" height="3" fill="#ff0000" />
<rect x="413" y="591" width="3" height="3" fill="#00ff00" />
<rect x="419" y="591" width="3" height="3" fill="#00ff00" />
<rect x="425" y="592" width="3" height="2" fill="#ff0000" />
<rect x="431" y="589" width="3" height="5" fill="#00ff00" />
<rect x="437" y="589" width="3" height="5" fill="#ff0000" />
<rect x="443" y="590" width="3" height="4" fill="#ff0000" />
<rect x="449" y="591" width="3" height="3" fill="#ffee00" />
<rect x="455" y="581" width="3" height="13" fill="#00ff00" />
<rect x="461" y="567" width="3" height="27" fill="#00ff00" />
<rect x="467" y="587" width="3" height="7" fill="#ff0000" />
<rect x="473" y="583" width="3" height="11" fill="#00ff00" />
<rect x="479" y="587" width="3" height="7" fill="#ff0000" />
<rect x="485" y="592" width="3" height="2" fill="#ff0000" />
<rect x="491" y="589" width="3" height="5" fill="#ff0000" />
<rect x="497" y="588" width="3" height="6" fill="#ffee00" />
<rect x="503" y="590" width="3" height="4" fill="#ff0000" />
<rect x="509" y="591" width="3" height="3" fill="#ff0000" />
<rect x="515" y="588" width="3" height="6" fill="#00ff00" />
<rect x="521" y="590" width="3" height="4" fill="#ff0000" />
<rect x="527" y="575" width="3" height="19" fill="#00ff00" />
<rect x="533" y="574" width="3" height="20" fill="#00ff00" />
<rect x="539" y="584" width="3" height="10" fill="#ff0000" />
<rect x="545" y="583" width="3" height="11" fill="#ff0000" />
<rect x="551" y="589" width="3" height="5" fill="#ff0000" />
<rect x="557" y="585" width="3" height="9" fill="#00ff00" />
<rect x="563" y="588" width="3" height="6" fill="#ffee00" />
<rect x="569" y="589" width="3" height="5" fill="#ff0000" />
<rect x="575" y="589" width="3" height="5" fill="#ff0000" />
<rect x="581" y="582" width="3" height="12" fill="#00ff00" />
<rect x="587" y="584" width="3" height="10" fill="#00ff00" />
<rect x="593" y="588" width="3" height="6" fill="#ff0000" />
<rect x="599" y="585" width="3" height="9" fill="#00ff00" />
<rect x="605" y="587" width="3" height="7" fill="#ff0000" />
<rect x="611" y="556" width="3" height="38" fill="#00ff00" />
<rect x="617" y="566" width="3" height="28" fill="#00ff00" />
<rect x="623" y="550" width="3" height="44" fill="#00ff00" />
<rect x="629" y="572" width="3" height="22" fill="#ff0000" />
<rect x="635" y="533" width="3" height="61" fill="#00ff00" />
<rect x="641" y="568" width="3" height="26" fill="#ff0000" />
<rect x="647" y="534" width="3" height="60" fill="#ff0000" />
<rect x="653" y="561" width="3" height="33" fill="#ff0000" />
<rect x="659" y="581" width="3" height="13" fill="#ff0000" />
<rect x="665" y="586" width="3" height="8" fill="#ff0000" />
<rect x="671" y="586" width="3" height="8" fill="#00ff00" />
<rect x="677" y="577" width="3" height="17" fill="#00ff00" />
<rect x="683" y="584" width="3" height="10" fill="#00ff00" />
<rect x="689" y="586" width="3" height="8" fill="#ff0000" />
<rect x="695" y="587" width="3" height="7" fill="#ff0000" />
<rect x="701" y="583" width="3" height="11" fill="#00ff00" />
<rect x="707" y="571" width="3" height="23" fill="#ff0000" />
<rect x="713" y="577" width="3" height="17" fill="#ff0000" />
<rect x="719" y="581" width="3" height="13" fill="#00ff00" />
<rect x="725" y="582" width="3" height="12" fill="#ff0000" />
<rect x="731" y="589" width="3" height="5" fill="#00ff00" />
<rect x="737" y="572" width="3" height="22" fill="#00ff00" />
<rect x="743" y="578" width="3" height="16" fill="#00ff00" />
<rect x="749" y="565" width="3" height="29" fill="#00ff00" />
<rect x="755" y="579" width="3" height="15" fill="#00ff00" />
<rect x="761" y="583" width="3" height="11" fill="#ff0000" />
<rect x="767" y="579" width="3" height="15" fill="#ff0000" />
<rect x="773" y="586" width="3" height="8" fill="#ff0000" />
<rect x="779" y="587" width="3" height="7" fill="#ff0000" />
<rect x="785" y="586" width="3" height="8" fill="#ff0000" />
<rect x="791" y="592" width="3" height="2" fill="#ff0000" />
<rect x="797" y="589" width="3" height="5" fill="#ff0000" />
<rect x="803" y="589" width="3" height="5" fill="#ff0000" />
<rect x="809" y="585" width="3" height="9" fill="#00ff00" />
<rect x="815" y="588" width="3" height="6" fill="#ff0000" />
<rect x="821" y="588" width="3" height="6" fill="#ff0000" />
<rect x="827" y="583" width="3" height="11" fill="#00ff00" />
<rect x="833" y="590" width="3" height="4" fill="#ff0000" />
<rect x="839" y="586" width="3" height="8" fill="#ff0000" />
<rect x="845" y="585" width="3" height="9" fill="#ff0000" />
<rect x="851" y="577" width="3" height="17" fill="#00ff00" />
<rect x="857" y="581" width="3" height="13" fill="#00ff00" />
<rect x="863" y="583" width="3" height="11" fill="#00ff00" />
<rect x="869" y="584" width="3" height="10" fill="#ff0000" />
<rect x="875" y="584" width="3" height="10" fill="#00ff00" />
<rect x="881" y="582" width="3" height="12" fill="#00ff00" />
<rect x="887" y="587" width="3" height="7" fill="#00ff00" />
<rect x="893" y="583" width="3" height="11" fill="#ff0000" />
<rect x="899" y="585" width="3" height="9" fill="#00ff00" />
<rect x="905" y="585" width="3" height="9" fill="#ff0000" />
<rect x="911" y="589" width="3" height="5" fill="#00ff00" />
<rect x="917" y="581" width="3" height="13" fill="#00ff00" />
<rect x="923" y="584" width="3" height="10" fill="#ff0000" />
<rect x="929" y="586" width="3" height="8" fill="#00ff00" />
<rect x="935" y="575" width="3" height="19" fill="#00ff00" />
<rect x="941" y="584" width="3" height="10" fill="#ff0000" />
<rect x="947" y="589" width="3" height="5" fill="#ff0000" />
<rect x="953" y="590" width="3" height="4" fill="#ff0000" />
<rect x="959" y="591" width="3" height="3" fill="#ff0000" />
<rect x="965" y="592" width="3" height="2" fill="#00ff00" />
<rect x="971" y="590" width="3" height="4" fill="#00ff00" />
<rect x="977" y="591" width="3" height="3" fill="#00ff00" />
<rect x="983" y="591" width="3" height="3" fill="#00ff00" />
<rect x="989" y="591" width="3" height="3" fill="#ffee00" />
<rect x="995" y="591" width="3" height="3" fill="#ff0000" />
<rect x="1001" y="587" width="3" height="7" fill="#00ff00" />
<rect x="1007" y="591" width="3" height="3" fill="#ff0000" />
<rect x="1013" y="593" width="3" height="1" fill="#ff0000" />
<rect x="1019" y="592" width="3" height="2" fill="#00ff00" />
<rect x="1025" y="591" width="3" height="3" fill="#ff0000" />
<rect x="1031" y="592" width="3" height="2" fill="#ff0000" />
<rect x="1037" y="593" width="3" height="1" fill="#00ff00" />
<rect x="1043" y="592" width="3" height="2" fill="#ff0000" />
<rect x="1049" y="592" width="3" height="2" fill="#ff0000" />
<rect x="1055" y="593" width="3" height="1" fill="#00ff00" />
<rect x="1061" y="591" width="3" height="3" fill="#ff0000" />
<rect x="1067" y="591" width="3" height="3" fill="#ff0000" />
<rect x="1073" y="585" width="3" height="9" fill="#00ff00" />
<rect x="1079" y="588" width="3" height="6" fill="#ff0000" />
<rect x="1085" y="592" width="3" height="2" fill="#ff0000" />
<rect x="1091" y="592" width="3" height="2" fill="#ffee00" />
<rect x="1097" y="590" width="3" height="4" fill="#ff0000" />
<rect x="1103" y="591" width="3" height="3" fill="#ff0000" />
<rect x="1109" y="591" width="3" height="3" fill="#ff0000" />
<rect x="1115" y="591" width="3" height="3" fill="#ff0000" />
<rect x="1121" y="590" width="3" height="4" fill="#00ff00" />
<rect x="1127" y="587" width="3" height="7" fill="#00ff00" />
<rect x="1133" y="584" width="3" height="10" fill="#ff0000" />
<rect x="1139" y="589" width="3" height="5" fill="#ffee00" />
<rect x="1145" y="589" width="3" height="5" fill="#ffee00" />
<rect x="1151" y="591" width="3" height="3" fill="#ffee00" />
<rect x="1157" y="587" width="3" height="7" fill="#00ff00" />
<rect x="1163" y="587" width="3" height="7" fill="#ff0000" />
<rect x="1169" y="578" width="3" height="16" fill="#00ff00" />
<rect x="1175" y="591" width="3" height="3" fill="#ff0000" />
<rect x="1181" y="590" width="3" height="4" fill="#ff0000" />
<rect x="1187" y="591" width="3" height="3" fill="#ff0000" />
<rect x="1193" y="591" width="3" height="3" fill="#ff0000" />
<rect x="1199" y="591" width="3" height="3" fill="#ff0000" />
<rect x="1205" y="577" width="3" height="17" fill="#00ff00" />
<rect x="1211" y="587" width="3" height="7" fill="#ff0000" />
<rect x="1217" y="588" width="3" height="6" fill="#ff0000" />
<rect x="1223" y="589" width="3" height="5" fill="#00ff00" />
<rect x="1229" y="584" width="3" height="10" fill="#00ff00" />
<rect x="1235" y="572" width="3" height="22" fill="#ff0000" />
<rect x="1241" y="585" width="3" height="9" fill="#ff0000" />
<rect x="1247" y="590" width="3" height="4" fill="#00ff00" />
<rect x="1253" y="582" width="3" height="12" fill="#00ff00" />
<rect x="1259" y="582" width="3" height="12" fill="#00ff00" />
<line x1="19" y1="593.5" x2="1296" y2="593.5" stroke="#00a000" />
<line x1="19" y1="623.5" x2="1296" y2="623.5" stroke="#a00000" />
<polyline points="360.1,666.3 373.6,665 391.7,661.7 412.3,659.3 430.4,656 448.5,651.3 464,644.4 474.3,641.3 487.2,639.2 502.7,639.2 510.5,640.5 523.4,639.2 533.7,634 546.6,632.2 559.5,630.9 567.3,632.7 577.6,637.9 587.9,637.9 598.3,634.8 608.6,632.2 617.6,625 626.7,616 637,605.6 644.8,602.3 653.8,602.3 662.8,605.6 673.2,610.8 680.9,612.6 690.3,613.4 698.1,617.8 705.8,621.1 713.6,630.2 721.3,637.9 729.1,642.6 747.1,642.6 757.5,637.9 778.1,636.6 791.1,640.5 804,648.2 819.5,656 835,661.7 842.7,663 855.6,663 866,658.6 881.4,651.3 899.5,643.1 912.4,640 927.9,634.8 943.4,626.8 953.8,626.8 966.7,629.6 984.8,628.3 1005.4,626.8 1053.6,626.8 1066.5,628.3 1076.8,627.1 1102.6,625.5 1136.2,625.5 1159.5,624.5 1172.4,622.4 1180.1,622.4 1195.6,625.5 1224,625.5 1234.4,623.7 1249.9,623.7 1260.2,620.3" fill="none" stroke="#ff0000" stroke-width="2" />
<polyline points="409.2,662.4 430.4,658.6 456.2,653.9 474.3,648.2 495,643.6 515.6,641.3 528.5,640.5 544,636.6 562.1,634.5 582.8,635.3 606,634.8 618.9,631.4 631.8,624.5 644.8,616 660.2,610.8 675.7,611.6 692.9,611.6 705.8,616 718.7,621.1 731.7,628.9 747.1,635.3 762.6,637.4 788.5,637.9 804,641.8 824.6,649.5 845.3,656 860.8,658.6 871.1,658.6 891.8,653.9 912.4,646.9 933.1,640.5 958.9,632.2 979.6,630.9 1010.6,628.3 1040,627.6 1071.7,627.6 1136.2,626.8 1164.6,625.8 1180.1,624.5 1200.8,625 1226.6,625 1252.4,624.2 1260.2,623.2" fill="none" stroke="#00e8e8" stroke-width="1" />
<line x1="19" y1="675.5" x2="1296" y2="675.5" stroke="#a00000" />
<line x1="19" y1="719.5" x2="1296" y2="719.5" stroke="#00a000" />
<polyline points="258.1,723.3 264.5,719.5 273.6,718.2 281.3,713.8 289.1,713 295.5,704.7 300.7,693.1 307.1,690.5 312.3,683.3 317.5,688 323.9,693.1 330.4,704.7 336.8,705.5 343.3,711.2 349.8,717.7 358.8,721.5 367.8,726.7 374.3,726.7 380.8,722.8 388.5,721 396.3,717.7 402.7,719.5 409.2,722.8 415.6,721.5 426,716.4 432.4,699.6 438.9,697 445.3,701.4 451.8,704.7 462.1,700.9 469.9,704.7 477.6,708.6 485.4,716.4 491.8,721.5 498.3,719.5 509.9,725.9 517.6,717.7 524.1,708.6 529.3,695.7 534.4,690.5 540.9,690.5 547.3,697 555.1,704.7 562.8,710.4 573.2,718.4 579.6,718.4 587.4,709.9 590.3,702.2 600.7,686.1 605.8,684.1 613.6,683.6 623.9,675.6 635.5,675 642,680.2 649.7,695.7 660.1,711.2 667.8,716.4 673,718.9 679.4,711.2 684.6,700.9 691.1,697 696.2,704.7 702.7,704.7 709.1,713.8 719.5,716.4 732.4,716.4 740.1,700.9 747.9,689.2 755.6,684.1 760.8,684.6 769.8,691.8 778.9,708.6 786.6,718.9 796.9,725.9 809.9,726.7 822.8,728.8 835.7,726.7 847.3,725.9 853.8,715.1 860.2,699.6 864.1,689.2 874.4,685.4 887.3,681.5 893.8,685.4 900.2,681.5 908,685.4 913.2,685.4 918.3,682 924.8,689.8 929.9,689.8 936.8,684.1 948.4,687.2 956.2,703.4 962.6,713.8 966.5,716.9 972.9,716.4 978.1,713.3 984.6,697 991,687.2 1002.6,683.3 1007.8,694.4 1015.6,700.9 1031.1,706 1038.8,704.2 1050.4,710.4 1060.8,706.8 1068.5,713.8 1075,706 1090.5,707.8 1100.8,713.8 1111.1,722.3 1121.4,722.3 1129.2,709.9 1139.5,707.8 1152.4,711.2 1160.2,702.2 1169.2,700.9 1178.3,711.2 1193.8,724.9 1200.2,723.3 1206.7,709.9 1213.1,702.2 1220.9,698.3 1229.9,689.8 1236.4,694.4 1242.8,706 1248.5,712.5 1254.4,698.3 1260.4,688.7" fill="none" stroke="#ff0000" stroke-width="2" />
<polyline points="271,720.2 289.1,714.6 302,699.6 312.3,689.8 322.6,690.5 333,699.6 348.5,711.2 361.4,720.2 374.3,724.9 387.2,722.3 400.1,718.9 410.5,721.5 426,717.7 437.6,703.4 451.8,703.4 462.1,700.9 477.6,706 493.1,717.7 509.9,722.8 521.5,715.1 531.8,699.6 539.6,694.4 547.3,695.7 560.2,706 575.7,716.4 583.5,716.4 592.9,706 605.8,690.5 616.2,684.6 626.5,678.4 636.8,676.8 644.6,681.5 654.9,693.1 665.2,707.3 674.3,714.6 678.1,714.6 691.1,702.2 702.7,704.7 714.3,711.2 725.9,715.1 732.4,715.1 745.3,699.6 756.9,688.7 764.7,688.7 776.3,702.2 789.2,715.1 799.5,722.3 812.4,725.9 827.9,728 846,725.9 856.3,715.1 866.7,697 877,687.9 889.9,682.8 905.4,683.6 918.3,684.1 928.7,687.9 938.1,685.4 948.4,687.2 958.7,702.2 969.1,712.5 978.1,713.8 989.7,695.7 1002.6,686.1 1013,694.4 1031.1,703.4 1041.4,704.2 1051.7,708.6 1062,707.3 1069.8,708.6 1080.1,706.8 1093,707.8 1106,714.6 1121.4,721 1131.8,712.5 1142.1,709.4 1152.4,709.9 1162.8,704.7 1171.8,703.4 1183.4,712.5 1200.2,721.5 1211.8,709.9 1222.2,702.2 1231.2,694.4 1237.7,694.4 1248.5,706.8 1260.4,696.5" fill="none" stroke="#00e8e8" stroke-width="1" />
<line x1="1260.5" y1="61" x2="1260.5" y2="527" stroke="#a000a0" />
<line x1="1260.5" y1="530" x2="1260.5" y2="596" stroke="#a000a0" />
<line x1="1260.5" y1="598" x2="1260.5" y2="669" stroke="#a000a0" />
<line x1="1260.5" y1="671" x2="1260.5" y2="732" stroke="#a000a0" />
<rect x="1258" y="441" width="5" height="20" fill="#20f820" />
<rect x="1260" y="440" width="1" height="24" fill="#d0ffd0" />
<line x1="1296.5" y1="61" x2="1296.5" y2="527" stroke="#00ffff" />
<line x1="1296.5" y1="532" x2="1296.5" y2="594" stroke="#00ffff" />
<line x1="1296.5" y1="600" x2="1296.5" y2="668" stroke="#00ffff" />
<line x1="1296.5" y1="674" x2="1296.5" y2="728" stroke="#00ffff" />
<line x1="1288" y1="69.5" x2="1296" y2="69.5" stroke="#00ffff" />
<line x1="1293" y1="110.5" x2="1296" y2="110.5" stroke="#00ffff" />
<line x1="1288" y1="151.5" x2="1296" y2="151.5" stroke="#00ffff" />
<line x1="1293" y1="191.5" x2="1296" y2="191.5" stroke="#00ffff" />
<line x1="1288" y1="232.5" x2="1296" y2="232.5" stroke="#00ffff" />
<line x1="1293" y1="272.5" x2="1296" y2="272.5" stroke="#00ffff" />
<line x1="1288" y1="313.5" x2="1296" y2="313.5" stroke="#00ffff" />
<line x1="1293" y1="353.5" x2="1296" y2="353.5" stroke="#00ffff" />
<line x1="1288" y1="394.5" x2="1296" y2="394.5" stroke="#00ffff" />
<line x1="1293" y1="434.5" x2="1296" y2="434.5" stroke="#00ffff" />
<line x1="1288" y1="475.5" x2="1296" y2="475.5" stroke="#00ffff" />
<line x1="1293" y1="515.5" x2="1296" y2="515.5" stroke="#00ffff" />
<text x="1299.3" y="72.5" fill="#00ffff" font-family="'DejaVu Sans','Liberation Sans',sans-serif" font-size="9.70" letter-spacing="0.45" >17,5</text>
<text x="1299.3" y="154.5" fill="#00ffff" font-family="'DejaVu Sans','Liberation Sans',sans-serif" font-size="9.70" letter-spacing="0.45" >15,</text>
<text x="1299.3" y="235.5" fill="#00ffff" font-family="'DejaVu Sans','Liberation Sans',sans-serif" font-size="9.70" letter-spacing="0.45" >12,5</text>
<text x="1299.3" y="316.5" fill="#00ffff" font-family="'DejaVu Sans','Liberation Sans',sans-serif" font-size="9.70" letter-spacing="0.45" >10,</text>
<text x="1299.3" y="397.5" fill="#00ffff" font-family="'DejaVu Sans','Liberation Sans',sans-serif" font-size="9.70" letter-spacing="0.45" >7,5</text>
<text x="1299.3" y="478.5" fill="#00ffff" font-family="'DejaVu Sans','Liberation Sans',sans-serif" font-size="9.70" letter-spacing="0.45" >5,</text>
<text x="1300" y="444.5" fill="#e0d020" font-family="'DejaVu Sans','Liberation Sans',sans-serif" font-size="9.70" letter-spacing="0.45" >6,06</text>
<line x1="1288" y1="538.5" x2="1296" y2="538.5" stroke="#00ffff" />
<line x1="1293" y1="547.5" x2="1296" y2="547.5" stroke="#00ffff" />
<line x1="1288" y1="556.5" x2="1296" y2="556.5" stroke="#00ffff" />
<line x1="1293" y1="566.5" x2="1296" y2="566.5" stroke="#00ffff" />
<line x1="1288" y1="575.5" x2="1296" y2="575.5" stroke="#00ffff" />
<line x1="1293" y1="584.5" x2="1296" y2="584.5" stroke="#00ffff" />
<text x="1299.3" y="541.5" fill="#00ffff" font-family="'DejaVu Sans','Liberation Sans',sans-serif" font-size="9.70" letter-spacing="0.45" >30, M</text>
<text x="1299.3" y="559.5" fill="#00ffff" font-family="'DejaVu Sans','Liberation Sans',sans-serif" font-size="9.70" letter-spacing="0.45" >20, M</text>
<text x="1299.3" y="578.5" fill="#00ffff" font-family="'DejaVu Sans','Liberation Sans',sans-serif" font-size="9.70" letter-spacing="0.45" >10, M</text>
<clipPath id="cv"><rect x="1297" y="530" width="60" height="64"/></clipPath>
<g clip-path="url(#cv)">
<text x="1300" y="598" fill="#00ffff" font-family="'DejaVu Sans','Liberation Sans',sans-serif" font-size="9.70" letter-spacing="0.45" >0</text>
</g>
<line x1="1288" y1="600.5" x2="1296" y2="600.5" stroke="#00ffff" />
<line x1="1293" y1="611.5" x2="1296" y2="611.5" stroke="#00ffff" />
<line x1="1288" y1="623.5" x2="1296" y2="623.5" stroke="#00ffff" />
<line x1="1293" y1="635.5" x2="1296" y2="635.5" stroke="#00ffff" />
<line x1="1288" y1="647.5" x2="1296" y2="647.5" stroke="#00ffff" />
<line x1="1293" y1="659.5" x2="1296" y2="659.5" stroke="#00ffff" />
<clipPath id="cm"><rect x="1297" y="600" width="60" height="70"/></clipPath>
<g clip-path="url(#cm)">
<text x="1300" y="603.5" fill="#00ffff" font-family="'DejaVu Sans','Liberation Sans',sans-serif" font-size="9.70" letter-spacing="0.45" >0,5</text>
</g>
<text x="1300" y="626.5" fill="#00ffff" font-family="'DejaVu Sans','Liberation Sans',sans-serif" font-size="9.70" letter-spacing="0.45" >0</text>
<text x="1300" y="650.5" fill="#00ffff" font-family="'DejaVu Sans','Liberation Sans',sans-serif" font-size="9.70" letter-spacing="0.45" >-0,5</text>
<line x1="1288" y1="675.5" x2="1296" y2="675.5" stroke="#00ffff" />
<line x1="1293" y1="683.5" x2="1296" y2="683.5" stroke="#00ffff" />
<line x1="1288" y1="690.5" x2="1296" y2="690.5" stroke="#00ffff" />
<line x1="1293" y1="698.5" x2="1296" y2="698.5" stroke="#00ffff" />
<line x1="1288" y1="705.5" x2="1296" y2="705.5" stroke="#00ffff" />
<line x1="1293" y1="712.5" x2="1296" y2="712.5" stroke="#00ffff" />
<line x1="1288" y1="719.5" x2="1296" y2="719.5" stroke="#00ffff" />
<text x="1299.3" y="678.5" fill="#00ffff" font-family="'DejaVu Sans','Liberation Sans',sans-serif" font-size="9.70" letter-spacing="0.45" >80,</text>
<text x="1299.3" y="693.5" fill="#00ffff" font-family="'DejaVu Sans','Liberation Sans',sans-serif" font-size="9.70" letter-spacing="0.45" >60,</text>
<text x="1299.3" y="708.5" fill="#00ffff" font-family="'DejaVu Sans','Liberation Sans',sans-serif" font-size="9.70" letter-spacing="0.45" >40,</text>
<text x="1299.3" y="722.5" fill="#00ffff" font-family="'DejaVu Sans','Liberation Sans',sans-serif" font-size="9.70" letter-spacing="0.45" >20,</text>
<text x="22" y="542" fill="#f0f000" font-family="'DejaVu Sans','Liberation Sans',sans-serif" font-size="9.70" letter-spacing="0.45" >Volume</text>
<text x="22" y="610" fill="#f0f000" font-family="'DejaVu Sans','Liberation Sans',sans-serif" font-size="9.70" letter-spacing="0.45" >MA.Conv.Div</text>
<text x="22" y="683" fill="#f0f000" font-family="'DejaVu Sans','Liberation Sans',sans-serif" font-size="9.70" letter-spacing="0.45" >Stochastic,Slow</text>
<text x="339.5" y="73" fill="#ffee00" font-family="'DejaVu Sans','Liberation Sans',sans-serif" font-size="9.70" letter-spacing="0.45" >T</text>
<text x="345.5" y="73" fill="#00e000" font-family="'DejaVu Sans','Liberation Sans',sans-serif" font-size="9.70" letter-spacing="0.45" >B</text>
<text x="651.5" y="73" fill="#ffee00" font-family="'DejaVu Sans','Liberation Sans',sans-serif" font-size="9.70" letter-spacing="0.45" >T</text>
<text x="963.5" y="73" fill="#ffee00" font-family="'DejaVu Sans','Liberation Sans',sans-serif" font-size="9.70" letter-spacing="0.45" >T</text>
<polygon points="302.7,231.5 319.7,231.5 319.7,250.6 328.7,250.6 311.2,273.3 293.7,250.6 302.7,250.6" fill="#ffee00"/>
<polygon points="630,237.2 642,237.2 642,254.2 648.2,254.2 636,272 623.8,254.2 630,254.2" fill="#ffee00"/>
<polygon points="464,319 478,319 478,330.5 484,330.5 471,342 458,330.5 464,330.5" fill="#ffee00"/>
<polygon points="690.2,328.3 704.2,328.3 704.2,335.3 711.2,335.3 697.2,344 683.2,335.3 690.2,335.3" fill="#ffee00"/>
<polygon points="938.3,388 947.9,388 947.9,404.9 952.1,404.9 943.1,421 934.1,404.9 938.3,404.9" fill="#ffee00"/>
<polygon points="1254.1,396 1264.5,396 1264.5,410.5 1268.3,410.5 1259.3,426.8 1250.3,410.5 1254.1,410.5" fill="#ffee00"/>
<polygon points="1260.2,250.5 1270.8,250.5 1270.8,265.5 1275.5,265.5 1265.5,280.5 1255.5,265.5 1260.2,265.5" fill="none" stroke="#ffee00"/>
<polygon points="1254.5,316.5 1264,316.5 1264,329.5 1269,329.5 1259.2,342.5 1249.5,329.5 1254.5,329.5" fill="none" stroke="#ffee00"/>
<polygon points="855.5,506 865.4,513 860.8,513 860.8,520 850.2,520 850.2,513 845.6,513" fill="#ffee00"/>
<polygon points="1207,496.1 1219,504.7 1212.8,504.7 1212.8,513 1201.2,513 1201.2,504.7 1195,504.7" fill="#ffee00"/>
<polygon points="1276,493.4 1285,503.2 1280.9,503.2 1280.9,511 1271.1,511 1271.1,503.2 1267,503.2" fill="#ffee00"/>
<polygon points="1279.4,454.2 1288.9,461 1284.5,461 1284.5,466.7 1274.3,466.7 1274.3,461 1269.9,461" fill="#ffee00"/>
<rect x="209" y="735" width="3" height="6" fill="#00ffff" />
<rect x="215" y="735" width="3" height="6" fill="#00ffff" />
<rect x="221" y="735" width="3" height="6" fill="#00ffff" />
<rect x="227" y="735" width="3" height="6" fill="#00ffff" />
<rect x="233" y="735" width="3" height="6" fill="#00ffff" />
<rect x="239" y="735" width="3" height="6" fill="#00ffff" />
<rect x="245" y="735" width="3" height="6" fill="#00ffff" />
<rect x="251" y="735" width="3" height="6" fill="#00ffff" />
<rect x="257" y="735" width="3" height="6" fill="#00ffff" />
<rect x="275" y="735" width="3" height="6" fill="#00ffff" />
<rect x="281" y="735" width="3" height="6" fill="#00ffff" />
<rect x="287" y="735" width="3" height="6" fill="#00ffff" />
<rect x="293" y="735" width="3" height="6" fill="#00ffff" />
<rect x="299" y="735" width="3" height="6" fill="#00ffff" />
<rect x="305" y="735" width="3" height="6" fill="#00ffff" />
<rect x="311" y="735" width="3" height="6" fill="#00ffff" />
<rect x="317" y="735" width="3" height="6" fill="#00ffff" />
<rect x="323" y="735" width="3" height="6" fill="#00ffff" />
<rect x="329" y="735" width="3" height="6" fill="#00ffff" />
<rect x="335" y="735" width="3" height="6" fill="#00ffff" />
<rect x="341" y="735" width="3" height="6" fill="#00ffff" />
<rect x="347" y="735" width="3" height="6" fill="#00ffff" />
<rect x="353" y="735" width="3" height="6" fill="#00ffff" />
<rect x="359" y="735" width="3" height="6" fill="#00ffff" />
<rect x="365" y="735" width="3" height="6" fill="#00ffff" />
<rect x="377" y="735" width="3" height="6" fill="#00ffff" />
<rect x="383" y="735" width="3" height="6" fill="#00ffff" />
<rect x="389" y="735" width="3" height="6" fill="#00ffff" />
<rect x="395" y="735" width="3" height="6" fill="#00ffff" />
<rect x="401" y="735" width="3" height="6" fill="#00ffff" />
<rect x="407" y="735" width="3" height="6" fill="#00ffff" />
<rect x="413" y="735" width="3" height="6" fill="#00ffff" />
<rect x="419" y="735" width="3" height="6" fill="#00ffff" />
<rect x="425" y="735" width="3" height="6" fill="#00ffff" />
<rect x="431" y="735" width="3" height="6" fill="#00ffff" />
<rect x="437" y="735" width="3" height="6" fill="#00ffff" />
<rect x="443" y="735" width="3" height="6" fill="#00ffff" />
<rect x="449" y="735" width="3" height="6" fill="#00ffff" />
<rect x="455" y="735" width="3" height="6" fill="#00ffff" />
<rect x="461" y="735" width="3" height="6" fill="#00ffff" />
<rect x="473" y="735" width="3" height="6" fill="#00ffff" />
<rect x="479" y="735" width="3" height="6" fill="#00ffff" />
<rect x="485" y="735" width="3" height="6" fill="#00ffff" />
<rect x="497" y="735" width="3" height="6" fill="#00ffff" />
<rect x="503" y="735" width="3" height="6" fill="#00ffff" />
<rect x="509" y="735" width="3" height="6" fill="#00ffff" />
<rect x="515" y="735" width="3" height="6" fill="#00ffff" />
<rect x="521" y="735" width="3" height="6" fill="#00ffff" />
<rect x="533" y="735" width="3" height="6" fill="#00ffff" />
<rect x="539" y="735" width="3" height="6" fill="#00ffff" />
<rect x="545" y="735" width="3" height="6" fill="#00ffff" />
<rect x="551" y="735" width="3" height="6" fill="#00ffff" />
<rect x="557" y="735" width="3" height="6" fill="#00ffff" />
<rect x="563" y="735" width="3" height="6" fill="#00ffff" />
<rect x="587" y="735" width="3" height="6" fill="#00ffff" />
<rect x="605" y="735" width="3" height="6" fill="#00ffff" />
<rect x="611" y="735" width="3" height="6" fill="#00ffff" />
<rect x="617" y="735" width="3" height="6" fill="#00ffff" />
<rect x="629" y="735" width="3" height="6" fill="#00ffff" />
<rect x="635" y="735" width="3" height="6" fill="#00ffff" />
<rect x="641" y="735" width="3" height="6" fill="#00ffff" />
<rect x="647" y="735" width="3" height="6" fill="#00ffff" />
<rect x="653" y="735" width="3" height="6" fill="#00ffff" />
<rect x="659" y="735" width="3" height="6" fill="#00ffff" />
<rect x="665" y="735" width="3" height="6" fill="#00ffff" />
<rect x="671" y="735" width="3" height="6" fill="#00ffff" />
<rect x="677" y="735" width="3" height="6" fill="#00ffff" />
<rect x="683" y="735" width="3" height="6" fill="#00ffff" />
<rect x="695" y="735" width="3" height="6" fill="#00ffff" />
<rect x="701" y="735" width="3" height="6" fill="#00ffff" />
<rect x="707" y="735" width="3" height="6" fill="#00ffff" />
<rect x="713" y="735" width="3" height="6" fill="#00ffff" />
<rect x="725" y="735" width="3" height="6" fill="#00ffff" />
<rect x="737" y="735" width="3" height="6" fill="#00ffff" />
<rect x="743" y="735" width="3" height="6" fill="#00ffff" />
<rect x="749" y="735" width="3" height="6" fill="#00ffff" />
<rect x="755" y="735" width="3" height="6" fill="#00ffff" />
<rect x="761" y="735" width="3" height="6" fill="#00ffff" />
<rect x="767" y="735" width="3" height="6" fill="#00ffff" />
<rect x="773" y="735" width="3" height="6" fill="#00ffff" />
<rect x="779" y="735" width="3" height="6" fill="#00ffff" />
<rect x="785" y="735" width="3" height="6" fill="#00ffff" />
<rect x="791" y="735" width="3" height="6" fill="#00ffff" />
<rect x="797" y="735" width="3" height="6" fill="#00ffff" />
<rect x="803" y="735" width="3" height="6" fill="#00ffff" />
<rect x="809" y="735" width="3" height="6" fill="#00ffff" />
<rect x="815" y="735" width="3" height="6" fill="#00ffff" />
<rect x="821" y="735" width="3" height="6" fill="#00ffff" />
<rect x="827" y="735" width="3" height="6" fill="#00ffff" />
<rect x="833" y="735" width="3" height="6" fill="#00ffff" />
<rect x="839" y="735" width="3" height="6" fill="#00ffff" />
<rect x="845" y="735" width="3" height="6" fill="#00ffff" />
<rect x="851" y="735" width="3" height="6" fill="#00ffff" />
<rect x="857" y="735" width="3" height="6" fill="#00ffff" />
<rect x="863" y="735" width="3" height="6" fill="#00ffff" />
<rect x="869" y="735" width="3" height="6" fill="#00ffff" />
<rect x="875" y="735" width="3" height="6" fill="#00ffff" />
<rect x="881" y="735" width="3" height="6" fill="#00ffff" />
<rect x="887" y="735" width="3" height="6" fill="#00ffff" />
<rect x="893" y="735" width="3" height="6" fill="#00ffff" />
<rect x="899" y="735" width="3" height="6" fill="#00ffff" />
<rect x="905" y="735" width="3" height="6" fill="#00ffff" />
<rect x="911" y="735" width="3" height="6" fill="#00ffff" />
<rect x="917" y="735" width="3" height="6" fill="#00ffff" />
<rect x="923" y="735" width="3" height="6" fill="#00ffff" />
<rect x="929" y="735" width="3" height="6" fill="#00ffff" />
<rect x="935" y="735" width="3" height="6" fill="#00ffff" />
<rect x="941" y="735" width="3" height="6" fill="#00ffff" />
<rect x="947" y="735" width="3" height="6" fill="#00ffff" />
<rect x="953" y="735" width="3" height="6" fill="#00ffff" />
<rect x="959" y="735" width="3" height="6" fill="#00ffff" />
<rect x="965" y="735" width="3" height="6" fill="#00ffff" />
<rect x="971" y="735" width="3" height="6" fill="#00ffff" />
<rect x="977" y="735" width="3" height="6" fill="#00ffff" />
<rect x="983" y="735" width="3" height="6" fill="#00ffff" />
<rect x="995" y="735" width="3" height="6" fill="#00ffff" />
<rect x="1001" y="735" width="3" height="6" fill="#00ffff" />
<rect x="1013" y="735" width="3" height="6" fill="#00ffff" />
<rect x="1019" y="735" width="3" height="6" fill="#00ffff" />
<rect x="1025" y="735" width="3" height="6" fill="#00ffff" />
<rect x="1031" y="735" width="3" height="6" fill="#00ffff" />
<rect x="1037" y="735" width="3" height="6" fill="#00ffff" />
<rect x="1043" y="735" width="3" height="6" fill="#00ffff" />
<rect x="1049" y="735" width="3" height="6" fill="#00ffff" />
<rect x="1055" y="735" width="3" height="6" fill="#00ffff" />
<rect x="1061" y="735" width="3" height="6" fill="#00ffff" />
<rect x="1067" y="735" width="3" height="6" fill="#00ffff" />
<rect x="1079" y="735" width="3" height="6" fill="#00ffff" />
<rect x="1091" y="735" width="3" height="6" fill="#00ffff" />
<rect x="1097" y="735" width="3" height="6" fill="#00ffff" />
<rect x="1103" y="735" width="3" height="6" fill="#00ffff" />
<rect x="1109" y="735" width="3" height="6" fill="#00ffff" />
<rect x="1115" y="735" width="3" height="6" fill="#00ffff" />
<rect x="1121" y="735" width="3" height="6" fill="#00ffff" />
<rect x="1127" y="735" width="3" height="6" fill="#00ffff" />
<rect x="1133" y="735" width="3" height="6" fill="#00ffff" />
<rect x="1139" y="735" width="3" height="6" fill="#00ffff" />
<rect x="1145" y="735" width="3" height="6" fill="#00ffff" />
<rect x="1157" y="735" width="3" height="6" fill="#00ffff" />
<rect x="1163" y="735" width="3" height="6" fill="#00ffff" />
<rect x="1175" y="735" width="3" height="6" fill="#00ffff" />
<rect x="1181" y="735" width="3" height="6" fill="#00ffff" />
<rect x="1187" y="735" width="3" height="6" fill="#00ffff" />
<rect x="1193" y="735" width="3" height="6" fill="#00ffff" />
<rect x="1199" y="735" width="3" height="6" fill="#00ffff" />
<rect x="1205" y="735" width="3" height="6" fill="#00ffff" />
<rect x="1211" y="735" width="3" height="6" fill="#00ffff" />
<rect x="1241" y="735" width="3" height="6" fill="#00ffff" />
<rect x="1247" y="735" width="3" height="6" fill="#00ffff" />
<rect x="1253" y="735" width="3" height="6" fill="#00ffff" />
<rect x="1259" y="735" width="3" height="6" fill="#00ffff" />
<rect x="216" y="741" width="1" height="13" fill="#ffffff" />
<text x="219" y="751" fill="#00ffff" font-family="'DejaVu Sans','Liberation Sans',sans-serif" font-size="9.70" letter-spacing="0.45" >10</text>
<rect x="216" y="736" width="1" height="5" fill="#ff2020" />
<rect x="528" y="741" width="1" height="13" fill="#ffffff" />
<text x="531" y="751" fill="#00ffff" font-family="'DejaVu Sans','Liberation Sans',sans-serif" font-size="9.70" letter-spacing="0.45" >11</text>
<rect x="528" y="736" width="1" height="5" fill="#ff2020" />
<rect x="840" y="741" width="1" height="13" fill="#ffffff" />
<text x="843" y="751" fill="#00ffff" font-family="'DejaVu Sans','Liberation Sans',sans-serif" font-size="9.70" letter-spacing="0.45" >12</text>
<rect x="840" y="736" width="1" height="5" fill="#ff2020" />
<rect x="1158" y="741" width="1" height="13" fill="#ffffff" />
<text x="1161" y="751" fill="#00ffff" font-family="'DejaVu Sans','Liberation Sans',sans-serif" font-size="9.70" letter-spacing="0.45" >13</text>
<rect x="1158" y="736" width="1" height="5" fill="#ff2020" />
<rect x="18" y="754" width="1279" height="9" fill="#f0f0f0" />
<rect x="34" y="754" width="325" height="8" fill="#ffffff" />
<rect x="18" y="754" width="16" height="8" fill="#f4f4f4" stroke="#c8c8c8"/>
<polygon points="24,758.5 27,756 27,761" fill="#000"/>
<rect x="1280" y="754" width="16" height="8" fill="#f4f4f4" stroke="#c8c8c8"/>
<polygon points="1290,758.5 1287,756 1287,761" fill="#000"/>
<line x1="17" y1="762.5" x2="1297" y2="762.5" stroke="#a0a0a0" />
<line x1="17" y1="763.5" x2="1297" y2="763.5" stroke="#d8d8d8" />
<defs><linearGradient id="rf" x1="0" x2="0" y1="0" y2="1"><stop offset="0" stop-color="#ececf8"/><stop offset="1" stop-color="#c0c0ff"/></linearGradient></defs>
<rect x="1317" y="743" width="19" height="19" fill="#ffffff" />
<rect x="1318" y="744" width="18" height="18" fill="#909090" />
<rect x="1318" y="744" width="17" height="17" fill="url(#rf)" />
<g shape-rendering="auto" fill="none" stroke="#28b040" stroke-width="2.3"><path d="M1321.3,753.5 A5.2,5.2 0 0 1 1330.5,749.6"/><path d="M1331.7,752 A5.2,5.2 0 0 1 1322.5,756"/></g>
<g shape-rendering="auto" fill="#28b040"><polygon points="1332.8,747.2 1332.4,752.6 1327.6,750.6"/><polygon points="1320.2,758.4 1320.6,753 1325.4,755"/></g>
<rect x="1337" y="751" width="12" height="11" fill="#ffffff" />
<rect x="1338" y="752" width="11" height="10" fill="#808080" />
<rect x="1338" y="752" width="10" height="9" fill="#d0d0d0" />
<rect x="1349" y="751" width="12" height="11" fill="#ffffff" />
<rect x="1350" y="752" width="11" height="10" fill="#808080" />
<rect x="1350" y="752" width="10" height="9" fill="#d0d0d0" />
<polygon points="1339.5,756.5 1346,752.5 1346,760.5" fill="#0000ff"/>
<polygon points="1358.5,756.5 1352,752.5 1352,760.5" fill="#0000ff"/>
<rect x="1347" y="59" width="12" height="10" fill="#d4d0c8" stroke="#808080"/>
<rect x="1351" y="61" width="5" height="5" fill="none" stroke="#000"/>
</svg>
</div>
</body></html>
